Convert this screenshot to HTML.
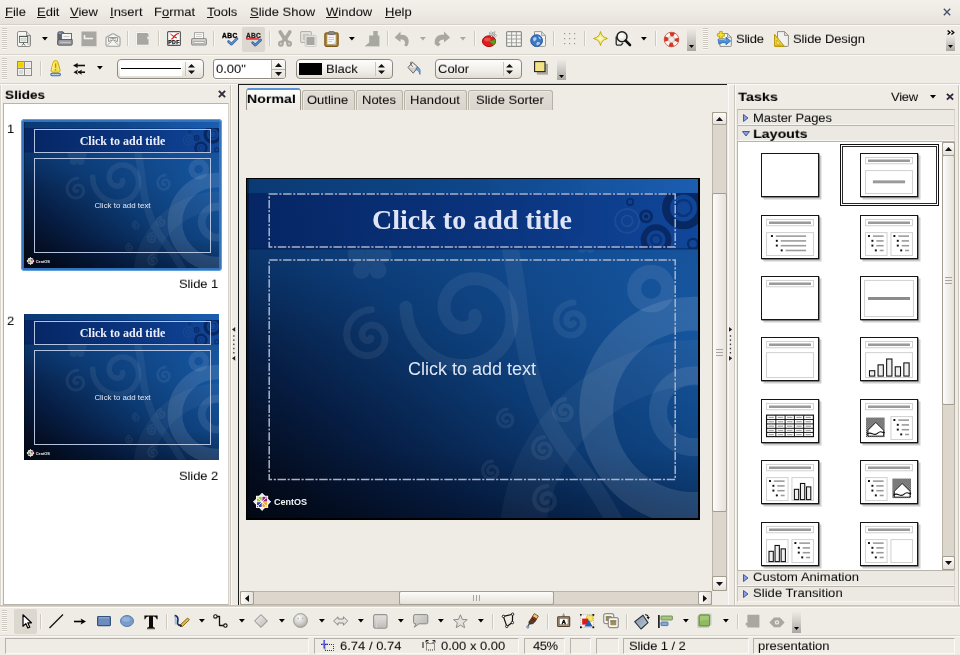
<!DOCTYPE html>
<html>
<head>
<meta charset="utf-8">
<title>Untitled 1 - OpenOffice.org Impress</title>
<style>
*{box-sizing:border-box;margin:0;padding:0}
html,body{width:960px;height:655px;overflow:hidden;background:#efebe5}
body{position:relative;font-family:"Liberation Sans",sans-serif;font-size:13px;color:#000}
.a{position:absolute}
.t{position:absolute;will-change:transform;transform-origin:0 12.3px;white-space:nowrap;line-height:16px;height:16px;color:#0c0c0c;-webkit-text-stroke:.05px #0c0c0c}
.w{-webkit-text-stroke:0 transparent}
.b{font-weight:bold;font-size:12.6px;color:#000;transform-origin:0 12.2px}
u{text-decoration:underline;text-underline-offset:1.2px;text-decoration-thickness:1px}
svg{position:absolute;overflow:visible}
svg.g{will-change:transform}
.hl{position:absolute;height:1px}
.vl{position:absolute;width:1px}
.sep{position:absolute;width:2px;height:15px;border-left:1px solid #cfcac1;border-right:1px solid #f9f8f5}
.press{position:absolute;background:#ddd8cf;border-radius:2px}
.combo{position:absolute;height:20px;border:1px solid #8f8b84;border-radius:4px;background:linear-gradient(#fdfdfc,#f2efea 55%,#e2ded6);box-shadow:0 1px 0 #faf9f7}
.field{position:absolute;height:20px;border:1px solid #8f8b84;border-radius:3px;background:#fff;box-shadow:0 1px 0 #faf9f7}
.row{position:absolute;height:16px;background:#ece9e3;border-top:1px solid #b9b4ab;border-left:1px solid #c9c5bd;border-right:1px solid #d9d5cd;border-bottom:1px solid #f7f6f3}
.tr{position:absolute;background:#dcd6cc;border:1px solid #b9b3a8}
.th{position:absolute;border:1px solid #a39d92;border-radius:2px}
.thv{background:linear-gradient(90deg,#fdfcfb,#f1eee9 50%,#e6e2db)}
.thh{background:linear-gradient(#fdfcfb,#f1eee9 50%,#e6e2db)}
.tab{position:absolute;top:90px;height:20px;background:linear-gradient(#e2ddd5,#dad5cc);border:1px solid #b7b2a8;border-bottom:none;border-radius:3px 3px 0 0;box-shadow:inset 1px 1px 0 #ece8e1}
.lay{position:absolute;width:58px;height:44px;background:#fff;border:1px solid #161616;box-shadow:.5px .5px 0 #333,2.5px 2.5px 0 #cecece}
.st{position:absolute;top:638px;height:16px;border-top:1px solid #b7b2a9;border-left:1px solid #b7b2a9;border-right:1px solid #fbfaf8;border-bottom:1px solid #fbfaf8}
.ovf{position:absolute;width:9px;background:linear-gradient(#efebe5,#d6d3ce 40%,#a9a7a3)}
</style>
</head>
<body>
<svg width="0" height="0" style="left:0;top:0"><defs><pattern id="dots" width="2" height="2" patternUnits="userSpaceOnUse"><rect width="1" height="1" fill="#222"/><rect x="1" y="1" width="1" height="1" fill="#222"/></pattern></defs><symbol id="art" viewBox="0 0 452 340" preserveAspectRatio="none"><defs>
<linearGradient id="bg1" x1="0" y1="1" x2="1" y2="0"><stop offset="0" stop-color="#020812"/><stop offset=".1" stop-color="#040e22"/><stop offset=".24" stop-color="#061c41"/><stop offset=".48" stop-color="#0c3b74"/><stop offset=".78" stop-color="#16569f"/><stop offset="1" stop-color="#2065b4"/></linearGradient>
<linearGradient id="bg2" x1="0" y1="0" x2="0" y2="1"><stop offset="0" stop-color="#0d4084" stop-opacity=".6"/><stop offset=".45" stop-color="#0b3a78" stop-opacity="0"/><stop offset=".8" stop-color="#010818" stop-opacity="0"/><stop offset="1" stop-color="#010818" stop-opacity=".28"/></linearGradient>
<linearGradient id="tb" x1="0" y1="0" x2="1" y2="0"><stop offset="0" stop-color="#052462"/><stop offset=".6" stop-color="#0a3480"/><stop offset="1" stop-color="#10469a"/></linearGradient>
<linearGradient id="top" x1="0" y1="0" x2="1" y2="0"><stop offset="0" stop-color="#0a3a72"/><stop offset=".5" stop-color="#0e4688"/><stop offset="1" stop-color="#1c5fb4"/></linearGradient>
<clipPath id="cl"><rect width="452" height="340"/></clipPath>
<clipPath id="clt"><rect y="14" width="452" height="56"/></clipPath>
</defs><g clip-path="url(#cl)"><rect width="452" height="340" fill="url(#bg1)"/><rect width="452" height="340" fill="url(#bg2)"/><g fill="none" stroke="#ffffff" stroke-linecap="round"><circle cx="448" cy="233" r="98" stroke-width="34" opacity=".11"/><circle cx="448" cy="233" r="36" stroke-width="18" opacity=".09"/><circle cx="456" cy="364" r="180" stroke-width="46" opacity=".045"/><circle cx="405" cy="110" r="17" stroke-width="14" opacity=".09"/><path d="M250 -10C256 40 268 80 272 120C278 180 290 230 316 266C330 286 345 300 372 350" stroke-width="17" opacity=".06"/><path d="M228.4 136.7 L228.8 138.2 L228.8 139.7 L228.4 141.4 L227.7 143.1 L226.7 144.7 L225.2 146.2 L223.5 147.5 L221.4 148.5 L219.0 149.1 L216.4 149.4 L213.7 149.2 L211.0 148.5 L208.2 147.3 L205.6 145.6 L203.2 143.4 L201.1 140.7 L199.4 137.6 L198.2 134.2 L197.5 130.5 L197.4 126.5 L198.0 122.5 L199.3 118.5 L201.2 114.6 L203.8 110.9 L207.0 107.6 L210.9 104.8 L215.2 102.5 L220.0 100.9 L225.1 100.1 L230.4 100.0 L235.8 100.8 L241.2 102.5 L246.3 105.1 L251.1 108.4 L255.4 112.6 L259.1 117.6 L262.1 123.1 L264.2 129.2 L265.4 135.7 L265.5 142.4 L264.6 149.2 L262.7 155.9 L259.6 162.4 L255.6 168.4 L250.5 173.9 L244.6 178.5 L237.9 182.3 L230.5 185.1 L222.7 186.7 L214.6 187.2 L206.4 186.3 L198.3 184.2 L190.4 180.8 L183.1 176.2 L176.4 170.4 L170.6 163.5 L165.9 155.8 L162.3 147.2 L160.1 138.1 L159.2 128.6" stroke-width="13" opacity=".065"/><path d="M327.1 144.7 L326.9 145.1 L326.6 145.5 L326.2 145.8 L325.7 146.1 L325.1 146.3 L324.4 146.4 L323.7 146.3 L323.0 146.1 L322.3 145.7 L321.7 145.2 L321.1 144.5 L320.6 143.7 L320.3 142.8 L320.2 141.8 L320.2 140.7 L320.4 139.6 L320.8 138.6 L321.4 137.6 L322.3 136.6 L323.3 135.8 L324.5 135.2 L325.8 134.8 L327.2 134.6 L328.7 134.6 L330.2 134.9 L331.6 135.5 L333.0 136.4 L334.2 137.5 L335.3 138.8 L336.2 140.3 L336.7 142.0 L337.0 143.9 L337.0 145.8 L336.7 147.7 L336.0 149.5 L334.9 151.3 L333.6 152.9 L332.0 154.3 L330.1 155.4 L328.0 156.2 L325.8 156.6 L323.5 156.7 L321.1 156.3 L318.8 155.6 L316.7 154.4 L314.7 152.9 L312.9 151.0 L311.5 148.8 L310.5 146.4 L309.9 143.8 L309.7 141.0 L310.0 138.2 L310.7 135.5 L312.0 132.9 L313.6 130.5 L315.7 128.4 L318.2 126.6 L320.9 125.3 L323.9 124.4 L327.1 124.0" stroke-width="6.5" opacity=".065"/><path d="M124.1 159.7 L123.9 160.2 L123.7 160.8 L123.2 161.2 L122.6 161.6 L121.9 161.9 L121.1 162.1 L120.2 162.1 L119.3 161.8 L118.4 161.4 L117.5 160.8 L116.7 159.9 L116.1 158.9 L115.6 157.7 L115.3 156.4 L115.3 155.0 L115.6 153.5 L116.1 152.1 L116.9 150.7 L118.0 149.4 L119.3 148.3 L120.9 147.5 L122.7 146.8 L124.6 146.5 L126.6 146.6 L128.7 147.0 L130.7 147.7 L132.6 148.9 L134.3 150.4 L135.8 152.2 L137.0 154.3 L137.9 156.7 L138.3 159.2 L138.3 161.8 L137.8 164.5 L136.9 167.1 L135.5 169.6 L133.6 171.8 L131.3 173.8 L128.7 175.3 L125.8 176.5 L122.7 177.1 L119.4 177.2 L116.2 176.7 L112.9 175.7 L109.9 174.1 L107.1 171.9 L104.6 169.3 L102.6 166.2 L101.1 162.8 L100.2 159.1 L99.9 155.2 L100.3 151.3 L101.4 147.4 L103.1 143.7 L105.5 140.3 L108.4 137.3 L111.9 134.8 L115.8 132.8 L120.1 131.6 L124.6 131.0" stroke-width="7" opacity=".065"/><path d="M319.1 234.7 L318.9 235.0 L318.5 235.3 L318.2 235.5 L317.7 235.7 L317.3 235.7 L316.7 235.7 L316.2 235.6 L315.7 235.4 L315.2 235.1 L314.7 234.6 L314.3 234.1 L314.0 233.5 L313.8 232.8 L313.8 232.1 L313.8 231.4 L314.0 230.6 L314.3 229.9 L314.8 229.2 L315.4 228.5 L316.1 228.0 L316.9 227.6 L317.9 227.3 L318.8 227.2 L319.8 227.3 L320.8 227.5 L321.8 227.9 L322.7 228.5 L323.5 229.3 L324.2 230.2 L324.8 231.2 L325.1 232.4 L325.3 233.6 L325.3 234.8 L325.0 236.1 L324.5 237.3 L323.9 238.4 L323.0 239.5 L321.9 240.4 L320.7 241.1 L319.3 241.6 L317.9 241.8 L316.4 241.8 L314.9 241.6 L313.4 241.1 L312.0 240.4 L310.7 239.4 L309.6 238.1 L308.7 236.7 L308.1 235.2 L307.7 233.5 L307.6 231.7 L307.8 230.0 L308.3 228.2 L309.1 226.6 L310.1 225.1 L311.5 223.7 L313.0 222.6 L314.8 221.8 L316.7 221.2 L318.7 221.0" stroke-width="4.5" opacity=".065"/><path d="M261.1 242.7 L260.8 243.0 L260.5 243.2 L260.2 243.4 L259.7 243.5 L259.3 243.6 L258.8 243.5 L258.3 243.4 L257.9 243.2 L257.4 242.9 L257.0 242.5 L256.7 242.0 L256.4 241.5 L256.3 240.9 L256.2 240.2 L256.3 239.5 L256.5 238.9 L256.8 238.2 L257.2 237.6 L257.7 237.1 L258.4 236.6 L259.1 236.3 L259.9 236.1 L260.7 236.0 L261.6 236.0 L262.4 236.3 L263.3 236.6 L264.1 237.1 L264.8 237.8 L265.3 238.6 L265.8 239.5 L266.1 240.5 L266.2 241.5 L266.2 242.6 L266.0 243.6 L265.6 244.7 L265.0 245.6 L264.2 246.5 L263.3 247.2 L262.3 247.8 L261.1 248.2 L259.9 248.5 L258.6 248.5 L257.3 248.3 L256.1 247.8 L254.9 247.2 L253.9 246.3 L253.0 245.3 L252.2 244.1 L251.7 242.8 L251.3 241.4 L251.3 239.9 L251.4 238.5 L251.9 237.0 L252.5 235.6 L253.4 234.4 L254.6 233.3 L255.9 232.3 L257.3 231.6 L258.9 231.2 L260.6 231.0" stroke-width="3.5" opacity=".065"/><path d="M298.1 272.7 L297.9 273.0 L297.5 273.3 L297.2 273.5 L296.7 273.7 L296.3 273.7 L295.7 273.7 L295.2 273.6 L294.7 273.4 L294.2 273.1 L293.7 272.6 L293.3 272.1 L293.0 271.5 L292.8 270.8 L292.8 270.1 L292.8 269.4 L293.0 268.6 L293.3 267.9 L293.8 267.2 L294.4 266.5 L295.1 266.0 L295.9 265.6 L296.9 265.3 L297.8 265.2 L298.8 265.3 L299.8 265.5 L300.8 265.9 L301.7 266.5 L302.5 267.3 L303.2 268.2 L303.8 269.2 L304.1 270.4 L304.3 271.6 L304.3 272.8 L304.0 274.1 L303.5 275.3 L302.9 276.4 L302.0 277.5 L300.9 278.4 L299.7 279.1 L298.3 279.6 L296.9 279.8 L295.4 279.8 L293.9 279.6 L292.4 279.1 L291.0 278.4 L289.7 277.4 L288.6 276.1 L287.7 274.7 L287.1 273.2 L286.7 271.5 L286.6 269.7 L286.8 268.0 L287.3 266.2 L288.1 264.6 L289.1 263.1 L290.5 261.7 L292.0 260.6 L293.8 259.8 L295.7 259.2 L297.7 259.0" stroke-width="4" opacity=".065"/><path d="M246.1 294.7 L245.8 295.0 L245.5 295.2 L245.2 295.4 L244.7 295.5 L244.3 295.6 L243.8 295.5 L243.3 295.4 L242.9 295.2 L242.4 294.9 L242.0 294.5 L241.7 294.0 L241.4 293.5 L241.3 292.9 L241.2 292.2 L241.3 291.5 L241.5 290.9 L241.8 290.2 L242.2 289.6 L242.7 289.1 L243.4 288.6 L244.1 288.3 L244.9 288.1 L245.7 288.0 L246.6 288.0 L247.4 288.3 L248.3 288.6 L249.1 289.1 L249.8 289.8 L250.3 290.6 L250.8 291.5 L251.1 292.5 L251.2 293.5 L251.2 294.6 L251.0 295.6 L250.6 296.7 L250.0 297.6 L249.2 298.5 L248.3 299.2 L247.3 299.8 L246.1 300.2 L244.9 300.5 L243.6 300.5 L242.3 300.3 L241.1 299.8 L239.9 299.2 L238.9 298.3 L238.0 297.3 L237.2 296.1 L236.7 294.8 L236.3 293.4 L236.3 291.9 L236.4 290.5 L236.9 289.0 L237.5 287.6 L238.4 286.4 L239.6 285.3 L240.9 284.3 L242.3 283.6 L243.9 283.2 L245.6 283.0" stroke-width="3.5" opacity=".065"/><path d="M301.1 323.7 L300.9 324.0 L300.6 324.3 L300.2 324.6 L299.7 324.8 L299.2 324.9 L298.7 324.9 L298.1 324.8 L297.5 324.6 L296.9 324.2 L296.4 323.8 L296.0 323.2 L295.6 322.6 L295.4 321.8 L295.3 321.0 L295.3 320.2 L295.5 319.3 L295.9 318.5 L296.4 317.7 L297.1 317.0 L297.9 316.4 L298.8 315.9 L299.8 315.6 L300.9 315.5 L302.1 315.5 L303.2 315.8 L304.3 316.2 L305.4 316.9 L306.3 317.8 L307.1 318.8 L307.7 320.0 L308.2 321.3 L308.4 322.7 L308.3 324.1 L308.1 325.5 L307.5 326.9 L306.7 328.3 L305.7 329.5 L304.5 330.5 L303.1 331.3 L301.5 331.9 L299.8 332.2 L298.1 332.2 L296.4 332.0 L294.6 331.4 L293.0 330.5 L291.6 329.4 L290.3 328.0 L289.2 326.3 L288.5 324.5 L288.0 322.6 L287.9 320.5 L288.1 318.5 L288.7 316.5 L289.6 314.5 L290.9 312.8 L292.4 311.2 L294.2 309.9 L296.3 308.9 L298.5 308.3 L300.8 308.0" stroke-width="4.5" opacity=".065"/></g><g fill="#fff" opacity="0.06"><circle cx="123.0" cy="66.0" r="8.7"/><circle cx="136.3" cy="75.7" r="8.7"/><circle cx="131.2" cy="91.3" r="8.7"/><circle cx="114.8" cy="91.3" r="8.7"/><circle cx="109.7" cy="75.7" r="8.7"/><circle cx="123" cy="80" r="7.0"/></g><g fill="#fff" opacity="0.08"><circle cx="350.0" cy="-1.0" r="5.6"/><circle cx="358.6" cy="5.2" r="5.6"/><circle cx="355.3" cy="15.3" r="5.6"/><circle cx="344.7" cy="15.3" r="5.6"/><circle cx="341.4" cy="5.2" r="5.6"/><circle cx="350" cy="8" r="4.5"/></g><g fill="#fff" opacity="0.05"><circle cx="340.0" cy="57.0" r="4.3"/><circle cx="346.7" cy="61.8" r="4.3"/><circle cx="344.1" cy="69.7" r="4.3"/><circle cx="335.9" cy="69.7" r="4.3"/><circle cx="333.3" cy="61.8" r="4.3"/><circle cx="340" cy="64" r="3.5"/></g><rect y="0" width="452" height="14" fill="url(#top)" opacity=".9"/><rect y="14" width="452" height="56" fill="url(#tb)" opacity=".93"/><rect y="69.5" width="452" height="1.2" fill="#041a4a" opacity=".6"/><g clip-path="url(#clt)" fill="none" stroke="#08265e"><circle cx="437.5" cy="29" r="17.5" stroke-width="8" opacity=".92"/><circle cx="437.5" cy="29" r="8" stroke-width="2.4" opacity=".55"/><circle cx="410" cy="61" r="12.5" stroke-width="6" opacity=".88"/><circle cx="410" cy="61" r="5" stroke-width="2.2" opacity=".6"/><circle cx="400" cy="37.5" r="5.6" stroke-width="2.8" opacity=".85"/><circle cx="400" cy="37.5" r="2.2" fill="#08265e" stroke="none" opacity=".9"/><circle cx="384" cy="23" r="3.2" stroke-width="1.6" opacity=".8"/><circle cx="447" cy="65" r="5" stroke-width="2.4" opacity=".8"/><circle cx="381" cy="42" r="12" stroke="#ffffff" stroke-width="2" opacity=".06"/><circle cx="381" cy="42" r="5.5" stroke="#ffffff" stroke-width="2" opacity=".06"/></g><rect width="2" height="340" fill="#01060f" opacity=".35"/><g transform="translate(7.5,316.2) scale(.95)"><g transform="translate(8,8) rotate(45)"><rect x="-6.6" y="-6.6" width="13.2" height="13.2" fill="#fff" opacity=".9"/></g><rect x="1.6" y="1.6" width="12.8" height="12.8" fill="#fff"/><rect x="2.6" y="2.6" width="5" height="5" fill="#9ccd2a"/><rect x="8.4" y="2.6" width="5" height="5" fill="#932279"/><rect x="2.6" y="8.4" width="5" height="5" fill="#3a3aa0"/><rect x="8.4" y="8.4" width="5" height="5" fill="#efa724"/><g transform="translate(8,8) rotate(45)" fill="none" stroke="#fff" stroke-width=".9"><rect x="-6.2" y="-6.2" width="12.4" height="12.4"/><path d="M0 -6.2V6.2M-6.2 0H6.2"/></g><path d="M8 -1.2L9.8 1.4H6.2ZM8 17.2L9.8 14.6H6.2ZM-1.2 8L1.4 6.2V9.8ZM17.2 8L14.6 6.2V9.8Z" fill="#e8e8e8"/><text x="20.5" y="11.6" font-family="Liberation Sans" font-weight="bold" font-size="9" fill="#f4f4f4" textLength="35" lengthAdjust="spacingAndGlyphs">CentOS</text></g></g></symbol></svg>
<div class="a" style="left:0px;top:0px;width:960px;height:24px;background:linear-gradient(#f3f0eb,#efebe5 45%,#e6e2db)"></div>
<span class="t " id="m1" style="left:5px;top:4px;transform:scale(1,.93);"><u>F</u>ile</span>
<span class="t " id="m2" style="left:37px;top:4px;transform:scale(1,.93);"><u>E</u>dit</span>
<span class="t " id="m3" style="left:70px;top:4px;transform:scale(1,.93);"><u>V</u>iew</span>
<span class="t " id="m4" style="left:110px;top:4px;transform:scale(1,.93);"><u>I</u>nsert</span>
<span class="t " id="m5" style="left:154px;top:4px;transform:scale(1,.93);">F<u>o</u>rmat</span>
<span class="t " id="m6" style="left:207px;top:4px;transform:scale(1,.93);"><u>T</u>ools</span>
<span class="t " id="m7" style="left:250px;top:4px;transform:scale(1,.93);"><u>S</u>lide Show</span>
<span class="t " id="m8" style="left:326px;top:4px;transform:scale(1,.93);"><u>W</u>indow</span>
<span class="t " id="m9" style="left:385px;top:4px;transform:scale(1,.93);"><u>H</u>elp</span>
<svg style="left:943px;top:7.5px" width="8" height="8" viewBox="0 0 8 8"><path d="M.8 .8L7.2 7.2M7.2 .8L.8 7.2" stroke="#4a4f69" stroke-width="1.35"/></svg>
<div class="hl" style="left:0px;top:24px;width:960px;background:#d6d1c8"></div>
<div class="hl" style="left:0px;top:25px;width:960px;background:#fbfaf8"></div>
<svg style="left:2px;top:28px" width="5" height="22" viewBox="0 0 5 22"><rect x="0" y="0" width="5" height="1" fill="#cdc8bf"/><rect x="0" y="1" width="5" height="1" fill="#fbfaf8"/><rect x="0" y="2" width="5" height="1" fill="#cdc8bf"/><rect x="0" y="3" width="5" height="1" fill="#fbfaf8"/><rect x="0" y="4" width="5" height="1" fill="#cdc8bf"/><rect x="0" y="5" width="5" height="1" fill="#fbfaf8"/><rect x="0" y="6" width="5" height="1" fill="#cdc8bf"/><rect x="0" y="7" width="5" height="1" fill="#fbfaf8"/><rect x="0" y="8" width="5" height="1" fill="#cdc8bf"/><rect x="0" y="9" width="5" height="1" fill="#fbfaf8"/><rect x="0" y="10" width="5" height="1" fill="#cdc8bf"/><rect x="0" y="11" width="5" height="1" fill="#fbfaf8"/><rect x="0" y="12" width="5" height="1" fill="#cdc8bf"/><rect x="0" y="13" width="5" height="1" fill="#fbfaf8"/><rect x="0" y="14" width="5" height="1" fill="#cdc8bf"/><rect x="0" y="15" width="5" height="1" fill="#fbfaf8"/><rect x="0" y="16" width="5" height="1" fill="#cdc8bf"/><rect x="0" y="17" width="5" height="1" fill="#fbfaf8"/><rect x="0" y="18" width="5" height="1" fill="#cdc8bf"/><rect x="0" y="19" width="5" height="1" fill="#fbfaf8"/><rect x="0" y="20" width="5" height="1" fill="#cdc8bf"/><rect x="0" y="21" width="5" height="1" fill="#fbfaf8"/></svg>
<svg style="left:17px;top:31px" width="14" height="16" viewBox="0 0 14 16"><path d="M1.5 .5H9.5L13.5 4.5V14a1.5 1.5 0 0 1-1.5 1.5H2A1.5 1.5 0 0 1 .5 14V2A1.5 1.5 0 0 1 1.5 .5Z" fill="#f6f6f4" stroke="#8b8b88"/>
<path d="M9.5 .5V4.5H13.5" fill="#dcdcd8" stroke="#8b8b88"/>
<path d="M10 5H13V14H10Z" fill="#c4c4c0" opacity=".7"/>
<rect x="2.5" y="5.5" width="8" height="6" fill="#fbfbfa" stroke="#6a6a6a" stroke-width=".9"/>
<rect x="4" y="7.2" width="5" height="2.8" fill="#dde8d2" stroke="#b4c4b0" stroke-width=".6"/>
<path d="M2 5.4H11" stroke="#555" stroke-width="1.1"/>
<path d="M6.5 11.5V13.2M4.6 14.6L6.5 12.8L8.4 14.6" stroke="#555" stroke-width=".9" fill="none"/></svg>
<svg style="left:41.6px;top:36.5px" width="5.8" height="3.5" viewBox="0 0 5.8 3.5"><path d="M0 0H5.8L2.9 3.5Z" fill="#000"/></svg>
<svg style="left:57px;top:31px" width="16" height="15" viewBox="0 0 16 15"><path d="M.8 2.2A1.4 1.4 0 0 1 2.2 .8H6L7.5 2.5H9V13.5H.8Z" fill="#62656b" stroke="#4a4c52" stroke-width=".8"/>
<path d="M1.5 1.5H5.5V3H1.5Z" fill="#7aa6dc"/>
<rect x="4.5" y="2.5" width="10" height="7" fill="#f4f4f2" stroke="#6a6a6a"/>
<path d="M6.5 5.5H12.5" stroke="#c4c4c0"/>
<path d="M2.5 8.5H15.2V13A1.2 1.2 0 0 1 14 14.2H2A1.2 1.2 0 0 1 .8 13V9.5Z" fill="#999b9f" stroke="#54565c" stroke-width=".9"/>
<path d="M3 11.5H13.5" stroke="#c2c4c7" stroke-width="1.4"/></svg>
<svg style="left:81px;top:31px" width="16" height="16" viewBox="0 0 16 16"><rect x=".5" y=".5" width="15" height="15" fill="#a9a7a2"/>
<path d="M3.5 4V7.5H12" stroke="#f4f2ee" stroke-width="1.6" fill="none"/>
<rect x="0" y="15" width="16" height="1.2" fill="#e2dfd9"/></svg>
<svg style="left:105px;top:32.5px" width="16" height="14" viewBox="0 0 16 14"><path d="M1 5.4C1 4.8 1.3 4.4 1.8 4L6.6 1.2C7.5 .7 8.5 .7 9.4 1.2L14.2 4C14.7 4.4 15 4.8 15 5.4V11.8A1.4 1.4 0 0 1 13.6 13.2H2.4A1.4 1.4 0 0 1 1 11.8Z" fill="#f6f5f3" stroke="#a09f9b" stroke-width="1.1"/>
<path d="M3.6 4.6H12.4V8.6L8 6.8L3.6 8.6Z" fill="#fff" stroke="#85847f" stroke-width=".9"/>
<path d="M5 6.2C6.5 5.2 9.5 5.2 11 6.2" stroke="#85847f" stroke-width=".8" fill="none"/>
<path d="M2.2 12.2L6.6 8.6M13.8 12.2L9.4 8.6" stroke="#aeada9" stroke-width="1" fill="none"/></svg>
<div class="sep" style="left:127px;top:31px"></div>
<svg style="left:135px;top:31px" width="16" height="16" viewBox="0 0 16 16"><path d="M.6 .6H13.2L15 2.4V5.4H13.6V8.2H15V15.2H.6Z" fill="#f7f5f1" stroke="#e3e0da" stroke-width=".6"/>
<path d="M2 2H12.4L13.6 3.2V5.4H12.4V8.2H13.6V13.8H2Z" fill="#a9a7a2"/></svg>
<div class="sep" style="left:158px;top:31px"></div>
<svg class="g" style="left:167px;top:31px" width="14" height="15" viewBox="0 0 14 15"><rect x=".6" y=".6" width="12.8" height="13.8" rx="1" fill="#fbfbfa" stroke="#555" stroke-width="1.1"/>
<path d="M2.4 1.8C4.6 3.4 6.4 4.6 10 6.6L9.4 7.6C6 6 4 4.4 2.4 1.8Z" fill="#e02020"/>
<path d="M12 2C9.6 2.2 7.6 3.6 6.4 5.4C5.6 6.6 5 7.4 3.6 8L4.4 8.6C6 8.2 7 7.2 7.8 6C8.8 4.4 10 3.2 12 3Z" fill="#e02020"/>
<text x="7" y="12.8" font-family="Liberation Sans" font-weight="bold" font-size="5.2" text-anchor="middle" fill="#111" stroke="#111" stroke-width=".25" letter-spacing=".3">PDF</text></svg>
<svg style="left:191px;top:32px" width="16" height="14" viewBox="0 0 16 14"><rect x="3.5" y=".6" width="9" height="6.5" fill="#fafaf9" stroke="#a8a7a3"/>
<path d="M5 2.5H11M5 4.5H11" stroke="#d0cfcb"/>
<path d="M2 6.5H14A1.4 1.4 0 0 1 15.4 7.9V11.6A1.4 1.4 0 0 1 14 13H2A1.4 1.4 0 0 1 .6 11.6V7.9A1.4 1.4 0 0 1 2 6.5Z" fill="#cfcecb" stroke="#8f8e8a" stroke-width="1.1"/>
<rect x="2.8" y="9.6" width="10.4" height="2" fill="#f2f1ee" stroke="#9d9c98" stroke-width=".7"/></svg>
<div class="sep" style="left:213px;top:31px"></div>
<svg class="g" style="left:222px;top:32px" width="17" height="14" viewBox="0 0 17 14"><text x="0" y="5.6" font-family="Liberation Sans" font-weight="bold" font-size="6.6" fill="#000" letter-spacing=".5" stroke="#000" stroke-width=".35">ABC</text>
<path d="M6.5 9.5L9.5 12.2L15 6.6" stroke="#3465a4" stroke-width="2.6" fill="none" stroke-linecap="round" stroke-linejoin="round"/>
<path d="M6.7 9.5L9.5 12L14.8 6.8" stroke="#82aee0" stroke-width="1" fill="none" stroke-linecap="round" stroke-linejoin="round"/></svg>
<div class="press" style="left:242px;top:27px;width:23px;height:25px;"></div>
<svg class="g" style="left:246px;top:32px" width="16" height="16" viewBox="0 0 16 16"><text x="0" y="5.6" font-family="Liberation Sans" font-weight="bold" font-size="6.6" fill="#222" letter-spacing=".3" stroke="#222" stroke-width=".3">ABC</text>
<path d="M0 7.3L1 6.6L2 7.3L3 6.6L4 7.3L5 6.6L6 7.3L7 6.6L8 7.3L9 6.6L10 7.3L11 6.6L12 7.3L13 6.6" stroke="#e01818" stroke-width="1.1" fill="none"/>
<path d="M6.6 10.6L9.4 13.2L14.6 8" stroke="#2c5ea8" stroke-width="2.6" fill="none" stroke-linecap="round" stroke-linejoin="round"/>
<path d="M6.8 10.6L9.4 13L14.4 8.2" stroke="#86b0e2" stroke-width=".9" fill="none" stroke-linecap="round" stroke-linejoin="round"/></svg>
<div class="sep" style="left:269px;top:31px"></div>
<svg style="left:278px;top:31px" width="14" height="16" viewBox="0 0 14 16"><path d="M2.2 1L7 8.4L11.8 1" stroke="#a9a7a2" stroke-width="3.6" fill="none" stroke-linejoin="round" stroke-linecap="round"/>
<path d="M7 7.4L3.4 12M7 7.4L10.6 12" stroke="#a9a7a2" stroke-width="3" fill="none"/>
<ellipse cx="2.9" cy="12.8" rx="1.9" ry="2" fill="#d9d6d0" stroke="#a9a7a2" stroke-width="2"/>
<ellipse cx="11.1" cy="12.8" rx="1.9" ry="2" fill="#d9d6d0" stroke="#a9a7a2" stroke-width="2"/></svg>
<svg style="left:300px;top:31px" width="17" height="16" viewBox="0 0 17 16"><rect x=".7" y=".7" width="10.6" height="10.6" rx="1" fill="#f1efeb" stroke="#b3b1ac" stroke-width="1.2"/>
<rect x="2.6" y="2.6" width="6.8" height="6.8" fill="#c9c7c2"/>
<rect x="5" y="4.4" width="11" height="11" rx="1" fill="#f3f1ed" stroke="#c4c2bd" stroke-width=".8"/>
<rect x="6.4" y="5.8" width="8.2" height="8.2" fill="#a9a7a2"/></svg>
<svg style="left:323.5px;top:31px" width="15" height="16" viewBox="0 0 15 16"><rect x=".9" y="1.9" width="13.2" height="13.4" rx="1.6" fill="#b98a3c" stroke="#7e5a14" stroke-width="1.3"/>
<rect x="3" y="3.6" width="9" height="10" fill="#f7f7f5" stroke="#9a8c6c" stroke-width=".6"/>
<path d="M4.5 6.5H10M4.5 8.5H10M4.5 10.5H8" stroke="#c9c9c5"/>
<path d="M9 13.6L12 10.8V13.6Z" fill="#d8d8d4" stroke="#aaa" stroke-width=".4"/>
<rect x="4.6" y=".6" width="5.8" height="3" rx=".8" fill="#8a8a8a" stroke="#666" stroke-width=".8"/></svg>
<svg style="left:348.6px;top:36.5px" width="5.8" height="3.5" viewBox="0 0 5.8 3.5"><path d="M0 0H5.8L2.9 3.5Z" fill="#000"/></svg>
<svg style="left:364.5px;top:31px" width="16" height="16" viewBox="0 0 16 16"><path d="M8.3 0H12.7V4.6H14.4V15H0L4.2 11.6V4.6H8.3Z" fill="#a9a7a2"/>
<path d="M0 15.5H14.6" stroke="#d6d3cd" stroke-width="1"/></svg>
<div class="sep" style="left:387px;top:31px"></div>
<svg style="left:393.5px;top:31px" width="17" height="16" viewBox="0 0 17 16"><path d="M6.5 .5L.6 6.4L6.5 11V8.2C9.2 8.2 11 9.6 11.2 12.2L10.2 14.4L12.8 15.5C15 12.8 15.4 9 13.6 6.4C12 4.2 9.4 3.6 6.5 3.8Z" fill="#a9a7a2"/></svg>
<svg style="left:419.6px;top:36.5px" width="5.8" height="3.5" viewBox="0 0 5.8 3.5"><path d="M0 0H5.8L2.9 3.5Z" fill="#a9a7a2"/></svg>
<svg style="left:433.5px;top:31px" width="17" height="16" viewBox="0 0 17 16"><path d="M10 .5L16 6.4L10 11.5V8.4C7.2 8.4 5.6 9.4 4.6 11.4L6.6 13L4.2 15.4L.8 13.2C.2 9.6 1.4 6.6 3.6 5C5.4 3.8 7.6 3.6 10 3.8Z" fill="#a9a7a2"/></svg>
<svg style="left:459.6px;top:36.5px" width="5.8" height="3.5" viewBox="0 0 5.8 3.5"><path d="M0 0H5.8L2.9 3.5Z" fill="#a9a7a2"/></svg>
<div class="sep" style="left:474px;top:31px"></div>
<svg class="g" style="left:482px;top:31px" width="16" height="16" viewBox="0 0 16 16"><ellipse cx="7" cy="10.2" rx="6.6" ry="5.4" fill="#e21b1b" stroke="#a40000" stroke-width=".9"/>
<path d="M7 10.2L13.4 8.4A6.6 5.4 0 0 1 11.6 14Z" fill="#57a020" stroke="#3a7a0e" stroke-width=".5"/>
<ellipse cx="5.4" cy="8.6" rx="3.2" ry="1.8" fill="#f77" opacity=".55"/>
<text x="7.6" y="6.2" font-family="Liberation Sans" font-weight="bold" font-size="7.5" fill="#fff" stroke="#555" stroke-width=".7" paint-order="stroke">%</text></svg>
<svg style="left:506px;top:31px" width="16" height="16" viewBox="0 0 16 16"><rect x=".6" y=".6" width="14.8" height="14.8" rx="1" fill="#f6f6f4" stroke="#908f8b" stroke-width="1.2"/>
<path d="M1 4.3H15M1 8H15M1 11.7H15M5.6 1V15M10.4 1V15" stroke="#a3a29e" stroke-width="1.1"/></svg>
<svg style="left:530px;top:31px" width="17" height="16" viewBox="0 0 17 16"><path d="M4.5 .6H11.5L15.5 4.6V14.4A1 1 0 0 1 14.5 15.4H4.5Z" fill="#f4f4f2" stroke="#9a9995"/>
<path d="M11.5 .6V4.6H15.5Z" fill="#deddd9" stroke="#9a9995" stroke-width=".8"/>
<circle cx="6.6" cy="9.6" r="5.9" fill="#3b78c4" stroke="#1f4f94" stroke-width=".9"/>
<path d="M3 7.2C4.4 5.6 6 6 6.6 7.4C7 8.6 5.4 9.4 4.4 10.6C3.6 9.8 3 8.6 3 7.2ZM8.2 5.4C9.6 5.6 10.6 6.6 11 8C10 8.6 9 7.6 8.2 5.4ZM7 11.4C8.2 10.6 9.6 11 10 12.2C9.2 13.6 8 14.2 6.8 14.2C6.2 13.2 6.2 12.2 7 11.4Z" fill="#bcd6f4" opacity=".9"/></svg>
<div class="sep" style="left:553px;top:31px"></div>
<svg style="left:563.5px;top:33px" width="12" height="12" viewBox="0 0 12 12"><rect x="0" y="0" width="1.2" height="1.2" fill="#9a968f"/><rect x="0" y="5" width="1.2" height="1.2" fill="#9a968f"/><rect x="0" y="10" width="1.2" height="1.2" fill="#9a968f"/><rect x="5" y="0" width="1.2" height="1.2" fill="#9a968f"/><rect x="5" y="5" width="1.2" height="1.2" fill="#9a968f"/><rect x="5" y="10" width="1.2" height="1.2" fill="#9a968f"/><rect x="10" y="0" width="1.2" height="1.2" fill="#9a968f"/><rect x="10" y="5" width="1.2" height="1.2" fill="#9a968f"/><rect x="10" y="10" width="1.2" height="1.2" fill="#9a968f"/></svg>
<div class="sep" style="left:584px;top:31px"></div>
<svg style="left:592.5px;top:31px" width="15" height="15" viewBox="0 0 15 15"><path d="M7.5 .5C8.3 4.6 10.2 6.4 14.5 7.5C10.2 8.6 8.3 10.4 7.5 14.5C6.7 10.4 4.8 8.6 .5 7.5C4.8 6.4 6.7 4.6 7.5 .5Z" fill="#f7ec6a" stroke="#c8a70a" stroke-width="1"/>
<path d="M7.5 3.5C8 5.8 9 6.8 11.5 7.5C9 8.2 8 9.2 7.5 11.5C7 9.2 6 8.2 3.5 7.5C6 6.8 7 5.8 7.5 3.5Z" fill="#fdf8b8"/></svg>
<svg style="left:615px;top:31px" width="17" height="16" viewBox="0 0 17 16"><path d="M1.2 5.5V12.8A1.4 1.4 0 0 0 2.6 14.2H6L8 12" fill="#efeeeb" stroke="#2a2a2a" stroke-width="1.3"/>
<circle cx="7" cy="5.8" r="5" fill="#e9e9e6" stroke="#1c1c1c" stroke-width="1.5"/>
<circle cx="6.2" cy="4.8" r="2.6" fill="#fff" opacity=".8"/>
<path d="M10.6 9.6L15 14" stroke="#111" stroke-width="2.6" stroke-linecap="round"/></svg>
<svg style="left:640.6px;top:36.5px" width="5.8" height="3.5" viewBox="0 0 5.8 3.5"><path d="M0 0H5.8L2.9 3.5Z" fill="#000"/></svg>
<div class="sep" style="left:655px;top:31px"></div>
<svg style="left:664px;top:31.5px" width="15" height="15" viewBox="0 0 15 15"><circle cx="7.5" cy="7.5" r="5.2" fill="none" stroke="#f7f5f2" stroke-width="4.2"/>
<circle cx="7.5" cy="7.5" r="5.2" fill="none" stroke="#e0301e" stroke-width="4.2" stroke-dasharray="4.08 4.08" stroke-dashoffset="2.04"/>
<circle cx="7.5" cy="7.5" r="7.3" fill="none" stroke="#b8402e" stroke-width=".7"/>
<circle cx="7.5" cy="7.5" r="3.1" fill="none" stroke="#b9b4ae" stroke-width=".7"/></svg>
<div class="ovf" style="left:687px;top:28px;width:9px;height:23px;"></div>
<svg style="left:689px;top:44.5px" width="5" height="3" viewBox="0 0 5 3"><path d="M0 0H5L2.5 3Z" fill="#000"/></svg>
<svg style="left:703px;top:28px" width="5" height="22" viewBox="0 0 5 22"><rect x="0" y="0" width="5" height="1" fill="#cdc8bf"/><rect x="0" y="1" width="5" height="1" fill="#fbfaf8"/><rect x="0" y="2" width="5" height="1" fill="#cdc8bf"/><rect x="0" y="3" width="5" height="1" fill="#fbfaf8"/><rect x="0" y="4" width="5" height="1" fill="#cdc8bf"/><rect x="0" y="5" width="5" height="1" fill="#fbfaf8"/><rect x="0" y="6" width="5" height="1" fill="#cdc8bf"/><rect x="0" y="7" width="5" height="1" fill="#fbfaf8"/><rect x="0" y="8" width="5" height="1" fill="#cdc8bf"/><rect x="0" y="9" width="5" height="1" fill="#fbfaf8"/><rect x="0" y="10" width="5" height="1" fill="#cdc8bf"/><rect x="0" y="11" width="5" height="1" fill="#fbfaf8"/><rect x="0" y="12" width="5" height="1" fill="#cdc8bf"/><rect x="0" y="13" width="5" height="1" fill="#fbfaf8"/><rect x="0" y="14" width="5" height="1" fill="#cdc8bf"/><rect x="0" y="15" width="5" height="1" fill="#fbfaf8"/><rect x="0" y="16" width="5" height="1" fill="#cdc8bf"/><rect x="0" y="17" width="5" height="1" fill="#fbfaf8"/><rect x="0" y="18" width="5" height="1" fill="#cdc8bf"/><rect x="0" y="19" width="5" height="1" fill="#fbfaf8"/><rect x="0" y="20" width="5" height="1" fill="#cdc8bf"/><rect x="0" y="21" width="5" height="1" fill="#fbfaf8"/></svg>
<svg style="left:716.5px;top:31px" width="15" height="16" viewBox="0 0 15 16"><path d="M3 2.5H10.5L14.3 6.3V14.6A.8.8 0 0 1 13.5 15.4H3Z" fill="#f5f5f3" stroke="#8e8d89"/>
<path d="M10.5 2.5V6.3H14.3Z" fill="#dddcd8" stroke="#8e8d89" stroke-width=".8"/>
<path d="M1.2 8.2C4 7.4 7 7.6 9 8.4V6.2L13.6 10L9 13.8V11.8C6.6 11.4 3.8 11.8 2 13.2C1.6 11.6 1.2 10 1.2 8.2Z" fill="#4d8fd8" stroke="#2a62ac" stroke-width=".8"/>
<path d="M2 8.8C4.6 8.2 7 8.4 9.2 9.2" stroke="#a8cdf4" stroke-width=".9" fill="none"/>
<path d="M2.6 .4H5.2V2.6H7.4V5.2H5.2V7.4H2.6V5.2H.4V2.6H2.6Z" fill="#f5e030" stroke="#b89c00" stroke-width=".8"/></svg>
<span class="t " id="tsl" style="left:736px;top:30.5px;transform:scale(1,.93);letter-spacing:-.25px">Slide</span>
<svg style="left:774px;top:31px" width="15" height="16" viewBox="0 0 15 16"><path d="M3.5 .6H10.5L14.4 4.5V14.6A.8.8 0 0 1 13.6 15.4H3.5Z" fill="#f1f1ef" stroke="#8e8d89"/>
<path d="M10.5 .6V4.5H14.4Z" fill="#dddcd8" stroke="#8e8d89" stroke-width=".8"/>
<path d="M.6 3.4V15.4H10.4Z" fill="#f2d62c" stroke="#b8960a" stroke-width="1"/>
<path d="M2.8 9V13.2H6.2Z" fill="#efebe5" stroke="#b8960a" stroke-width=".6"/>
<path d="M2 15V13.8M4 15V13.8M6 15V13.8M8 15V13.8" stroke="#8a6e00" stroke-width=".6"/></svg>
<span class="t " id="tsd" style="left:792.5px;top:30.5px;transform:scale(1,.93);letter-spacing:-.1px">Slide Design</span>
<svg style="left:946.5px;top:29.5px" width="8" height="5" viewBox="0 0 8 5"><path d="M.6 .4L3 2.4L.6 4.4M4.4 .4L6.8 2.4L4.4 4.4" stroke="#000" stroke-width="1.3" fill="none"/></svg>
<div class="ovf" style="left:946px;top:35px;width:9px;height:16px;"></div>
<svg style="left:948px;top:44.5px" width="5" height="3" viewBox="0 0 5 3"><path d="M0 0H5L2.5 3Z" fill="#000"/></svg>
<div class="hl" style="left:0px;top:54px;width:960px;background:#dad5cc"></div>
<div class="hl" style="left:0px;top:55px;width:960px;background:#f9f8f5"></div>
<svg style="left:2px;top:58px" width="5" height="22" viewBox="0 0 5 22"><rect x="0" y="0" width="5" height="1" fill="#cdc8bf"/><rect x="0" y="1" width="5" height="1" fill="#fbfaf8"/><rect x="0" y="2" width="5" height="1" fill="#cdc8bf"/><rect x="0" y="3" width="5" height="1" fill="#fbfaf8"/><rect x="0" y="4" width="5" height="1" fill="#cdc8bf"/><rect x="0" y="5" width="5" height="1" fill="#fbfaf8"/><rect x="0" y="6" width="5" height="1" fill="#cdc8bf"/><rect x="0" y="7" width="5" height="1" fill="#fbfaf8"/><rect x="0" y="8" width="5" height="1" fill="#cdc8bf"/><rect x="0" y="9" width="5" height="1" fill="#fbfaf8"/><rect x="0" y="10" width="5" height="1" fill="#cdc8bf"/><rect x="0" y="11" width="5" height="1" fill="#fbfaf8"/><rect x="0" y="12" width="5" height="1" fill="#cdc8bf"/><rect x="0" y="13" width="5" height="1" fill="#fbfaf8"/><rect x="0" y="14" width="5" height="1" fill="#cdc8bf"/><rect x="0" y="15" width="5" height="1" fill="#fbfaf8"/><rect x="0" y="16" width="5" height="1" fill="#cdc8bf"/><rect x="0" y="17" width="5" height="1" fill="#fbfaf8"/><rect x="0" y="18" width="5" height="1" fill="#cdc8bf"/><rect x="0" y="19" width="5" height="1" fill="#fbfaf8"/><rect x="0" y="20" width="5" height="1" fill="#cdc8bf"/><rect x="0" y="21" width="5" height="1" fill="#fbfaf8"/></svg>
<svg style="left:17px;top:60.5px" width="15" height="15" viewBox="0 0 15 15"><rect x=".5" y=".5" width="14" height="14" fill="#f2f1ee" stroke="#8c8b87"/>
<rect x="1" y="1" width="6.5" height="6.5" fill="#f8dc18"/>
<rect x="2" y="2" width="4" height="4" fill="#f3cf00"/>
<rect x="9" y="2" width="4" height="4" fill="#e9e8e5"/><rect x="2" y="9" width="4" height="4" fill="#d9d8d5"/><rect x="9" y="9" width="4" height="4" fill="#e9e8e5"/>
<path d="M7.5 .5V14.5M.5 7.5H14.5" stroke="#8c8b87"/></svg>
<div class="sep" style="left:40px;top:61px"></div>
<svg style="left:50px;top:60px" width="12" height="16" viewBox="0 0 12 16"><path d="M5.6 .6C3.8 .6 3.2 1.8 3 3.2L1.2 9.6C.8 11.2 1.6 12.2 3 12.2H8.2C9.6 12.2 10.4 11.2 10 9.6L8.2 3.2C8 1.8 7.4 .6 5.6 .6Z" fill="#f6e458" stroke="#c8a60a" stroke-width="1"/>
<path d="M5.6 3.4V7.8" stroke="#b89400" stroke-width="1.3"/><circle cx="5.6" cy="9.8" r=".9" fill="#b89400"/>
<path d="M3.8 3.2L2.4 9.8" stroke="#fdf7b4" stroke-width="1"/>
<rect x=".8" y="13.2" width="9.6" height="2.5" rx="1.2" fill="#b6cdea" stroke="#3c6eb4" stroke-width="1.1"/></svg>
<svg style="left:73px;top:62.5px" width="12" height="12" viewBox="0 0 12 12"><path d="M12 2.5H3.5" stroke="#111" stroke-width="1.6"/><path d="M0 2.5L4.6 0V5Z" fill="#111"/>
<path d="M12 9.2H5" stroke="#111" stroke-width="1.6"/><path d="M.5 9.2L5 6.6L4 9.2L5 11.8Z" fill="#111"/><path d="M4.5 9.2L9 6.6L8 9.2L9 11.8Z" fill="#111"/></svg>
<svg style="left:96.6px;top:66px" width="5.8" height="3.5" viewBox="0 0 5.8 3.5"><path d="M0 0H5.8L2.9 3.5Z" fill="#000"/></svg>
<div class="combo" style="left:117px;top:59px;width:87px;height:20px;"></div>
<div class="a" style="left:120px;top:61.5px;width:62px;height:14px;background:#fff;border-radius:1px"></div>
<div class="hl" style="left:121px;top:68px;width:60px;background:#000"></div>
<div class="vl" style="left:185px;top:62px;height:14px;background:#c9c5bd"></div>
<svg style="left:187.5px;top:63.5px" width="7" height="10" viewBox="0 0 7 10"><path d="M0 3.6L3.5 0L7 3.6ZM0 6.4L3.5 10L7 6.4Z" fill="#111"/></svg>
<div class="field" style="left:213px;top:59px;width:73px;height:20px;"></div>
<div class="a" style="left:271px;top:60px;width:14px;height:18px;background:linear-gradient(#fbfaf8,#e6e2db);border-left:1px solid #b7b2a9;border-radius:0 2px 2px 0"></div>
<div class="hl" style="left:272px;top:69px;width:13px;background:#b7b2a9"></div>
<svg style="left:275px;top:62.5px" width="7" height="4" viewBox="0 0 7 4"><path d="M0 4L3.5 0L7 4Z" fill="#111"/></svg>
<svg style="left:275px;top:71.5px" width="7" height="4" viewBox="0 0 7 4"><path d="M0 0L3.5 4L7 0Z" fill="#111"/></svg>
<span class="t " id="w0" style="left:216px;top:61px;transform:scale(1,.93);">0.00"</span>
<div class="combo" style="left:296px;top:59px;width:97px;height:20px;"></div>
<div class="a" style="left:299px;top:62.5px;width:23px;height:12.5px;background:#000"></div>
<span class="t " id="cblack" style="left:326px;top:61px;transform:scale(1,.93);">Black</span>
<div class="vl" style="left:375px;top:62px;height:14px;background:#c9c5bd"></div>
<svg style="left:377.5px;top:63.5px" width="7" height="10" viewBox="0 0 7 10"><path d="M0 3.6L3.5 0L7 3.6ZM0 6.4L3.5 10L7 6.4Z" fill="#111"/></svg>
<svg style="left:406px;top:61px" width="15" height="14" viewBox="0 0 15 14"><path d="M2 6.5L6.5 1.2L12 6.2L7.2 12.2Z" fill="#d2d1ce" stroke="#6a6965" stroke-width="1"/>
<path d="M3.4 6.6L6.6 2.8L10.4 6.2Z" fill="#f2f1ee"/>
<path d="M5.2 .6C4.2 2.4 5 4.6 6.8 5.6" stroke="#555" stroke-width="1" fill="none"/>
<path d="M10.6 6.6C13.4 6.2 14.6 8 14 13.4C13.2 11 12.6 9.4 10 8.6Z" fill="#7da1d4" stroke="#3f6aa8" stroke-width=".7"/></svg>
<div class="combo" style="left:435px;top:59px;width:87px;height:20px;"></div>
<span class="t " id="ccolor" style="left:438px;top:61px;transform:scale(1,.93);">Color</span>
<div class="vl" style="left:503px;top:62px;height:14px;background:#c9c5bd"></div>
<svg style="left:505.5px;top:63.5px" width="7" height="10" viewBox="0 0 7 10"><path d="M0 3.6L3.5 0L7 3.6ZM0 6.4L3.5 10L7 6.4Z" fill="#111"/></svg>
<svg style="left:533.5px;top:60.5px" width="15" height="14" viewBox="0 0 15 14"><rect x="3" y="3" width="11" height="10.5" fill="#9b9994"/>
<rect x="2.6" y="2.6" width="11" height="10.5" fill="#b8b6b1" opacity=".6"/>
<rect x=".6" y=".6" width="10.4" height="10" fill="#f3e383" stroke="#222" stroke-width="1.1"/></svg>
<div class="ovf" style="left:557px;top:59px;width:9px;height:21px;"></div>
<svg style="left:559px;top:74.5px" width="5" height="3" viewBox="0 0 5 3"><path d="M0 0H5L2.5 3Z" fill="#000"/></svg>
<div class="hl" style="left:0px;top:83px;width:960px;background:#d8d3ca"></div>
<div class="hl" style="left:0px;top:84px;width:960px;background:#fbfaf8"></div>
<span class="t b" id="slidesT" style="left:5px;top:86.5px;transform:scale(1.078,.93);">Slides</span>
<svg style="left:218px;top:89.5px" width="8" height="8" viewBox="0 0 8 8"><path d="M.9 .9L7.1 7.1M7.1 .9L.9 7.1" stroke="#2c2c3a" stroke-width="1.9"/></svg>
<div class="a" style="left:3px;top:103px;width:226px;height:502px;background:#fff;border:1px solid #b9b4ab;border-right-color:#d5d1c9"></div>
<div class="vl" style="left:0px;top:85px;height:521px;background:#d9d5cd"></div>
<div class="vl" style="left:1px;top:85px;height:521px;background:#fbfaf8"></div>
<div class="vl" style="left:230px;top:85px;height:521px;background:#cbc6bd"></div>
<div class="vl" style="left:231px;top:85px;height:521px;background:#fbfaf8"></div>
<svg style="left:232.2px;top:327px" width="3.4" height="34" viewBox="0 0 3.4 34"><path d="M0 2.4L3.2 0V4.8ZM0 31.4L3.2 29V33.8Z" fill="#222"/><rect x="1.2" y="8.2" width="1.3" height="1.5" fill="#3a3a3a"/><rect x="1.2" y="12.399999999999999" width="1.3" height="1.5" fill="#3a3a3a"/><rect x="1.2" y="16.6" width="1.3" height="1.5" fill="#3a3a3a"/><rect x="1.2" y="20.8" width="1.3" height="1.5" fill="#3a3a3a"/><rect x="1.2" y="25.0" width="1.3" height="1.5" fill="#3a3a3a"/></svg>
<span class="t " id="n1" style="left:7px;top:121px;transform:scale(1,.93);">1</span>
<span class="t " id="n2" style="left:7px;top:312.8px;transform:scale(1,.93);">2</span>
<span class="t " id="sl1" style="left:179.2px;top:275.9px;transform:scale(1,.93);letter-spacing:-.1px">Slide 1</span>
<span class="t " id="sl2" style="left:179.2px;top:467.6px;transform:scale(1,.93);letter-spacing:-.1px">Slide 2</span>
<div class="a" style="left:21px;top:119px;width:201px;height:152px;background:#3474bc;border-radius:4px;box-shadow:inset 0 0 0 1px #5f9fdc"></div>
<svg class="g" style="left:24px;top:122px" width="195" height="146"><use href="#art" width="195" height="146"/></svg>
<div class="a" style="left:34px;top:129px;width:177px;height:24px;border:1px solid #b3c2de"></div>
<div class="a" style="left:34px;top:158px;width:177px;height:95px;border:1px solid #b3c2de"></div>
<span class="t w" style="left:34px;top:133px;width:177px;text-align:center;font-family:'Liberation Serif',serif;font-weight:bold;font-size:12px;color:#eef0fa">Click to add title</span>
<span class="t w" style="left:34px;top:198px;width:177px;text-align:center;font-size:7.9px;color:#e4e8f4">Click to add text</span>
<svg class="g" style="left:24px;top:314px" width="195" height="146"><use href="#art" width="195" height="146"/></svg>
<div class="a" style="left:34px;top:321px;width:177px;height:24px;border:1px solid #b3c2de"></div>
<div class="a" style="left:34px;top:350px;width:177px;height:95px;border:1px solid #b3c2de"></div>
<span class="t w" style="left:34px;top:325px;width:177px;text-align:center;font-family:'Liberation Serif',serif;font-weight:bold;font-size:12px;color:#eef0fa">Click to add title</span>
<span class="t w" style="left:34px;top:390px;width:177px;text-align:center;font-size:7.9px;color:#e4e8f4">Click to add text</span>
<div class="hl" style="left:238px;top:84px;width:489px;background:#1a1a1a"></div>
<div class="vl" style="left:238px;top:84px;height:522px;background:#1a1a1a"></div>
<div class="vl" style="left:728px;top:85px;height:521px;background:#fbfaf8"></div>
<div class="tab" style="left:302px;top:90px;width:53px;height:20px;"></div>
<div class="tab" style="left:356px;top:90px;width:47px;height:20px;"></div>
<div class="tab" style="left:404px;top:90px;width:63px;height:20px;"></div>
<div class="tab" style="left:468px;top:90px;width:85px;height:20px;"></div>
<div class="a" style="left:246px;top:88px;width:55px;height:22px;background:linear-gradient(#ffffff,#f7f6f3 40%,#efebe5);border:1px solid #9a958b;border-bottom:none;border-radius:4px 4px 0 0"></div>
<div class="a" style="left:247px;top:88px;width:53px;height:2px;background:#5b94d6;border-radius:3px 3px 0 0"></div>
<span class="t b" id="tab0" style="left:247.3px;top:90.8px;transform:scale(1.122,.93);">Normal</span>
<span class="t " id="tab1" style="left:307px;top:92px;transform:scale(1,.93);">Outline</span>
<span class="t " id="tab2" style="left:362px;top:92px;transform:scale(1,.93);">Notes</span>
<span class="t " id="tab3" style="left:410px;top:92px;transform:scale(1,.93);letter-spacing:.12px">Handout</span>
<span class="t " id="tab4" style="left:476px;top:92px;transform:scale(1,.93);">Slide Sorter</span>
<div class="a" style="left:246px;top:178px;width:454px;height:342px;background:#000"></div>
<svg class="g" style="left:247px;top:179px" width="451" height="339"><use href="#art" width="451" height="339"/></svg>
<svg style="left:246px;top:178px" width="454" height="342"><g fill="none" stroke="#aab3c8" stroke-width="1.5" stroke-dasharray="8.5 1.6 2.2 1.6"><rect x="23.2" y="16" width="406" height="53"/><rect x="23.2" y="82" width="406" height="219.5"/></g></svg>
<span class="t w" id="mtitle" style="left:269px;top:202px;width:406px;height:36px;line-height:36px;text-align:center;font-family:'Liberation Serif',serif;font-weight:bold;font-size:28px;color:#dfe4f6">Click to add title</span>
<span class="t w" id="mtext" style="left:269px;top:358px;width:406px;height:22px;line-height:22px;text-align:center;font-size:18px;color:#dfe6f4">Click to add text</span>
<div class="tr" style="left:712px;top:112px;width:15px;height:479px;"></div>
<div class="th thh" style="left:712px;top:112px;width:15px;height:13px;"></div>
<svg style="left:716px;top:116.5px" width="7" height="4" viewBox="0 0 7 4"><path d="M0 4L3.5 0L7 4Z" fill="#111"/></svg>
<div class="th thh" style="left:712px;top:576px;width:15px;height:15px;"></div>
<svg style="left:716px;top:581.5px" width="7" height="4" viewBox="0 0 7 4"><path d="M0 0L3.5 4L7 0Z" fill="#111"/></svg>
<div class="th thv" style="left:712px;top:193px;width:15px;height:319px;"></div>
<svg style="left:716px;top:349px" width="7" height="7" viewBox="0 0 7 7"><path d="M0 .5H7M0 3.5H7M0 6.5H7" stroke="#aaa59b" stroke-width="1"/></svg>
<div class="tr" style="left:240px;top:591px;width:472px;height:14px;"></div>
<div class="th thv" style="left:240px;top:591px;width:14px;height:14px;"></div>
<svg style="left:245px;top:594.5px" width="4" height="7" viewBox="0 0 4 7"><path d="M4 0L0 3.5L4 7Z" fill="#111"/></svg>
<div class="th thv" style="left:698px;top:591px;width:14px;height:14px;"></div>
<svg style="left:703px;top:594.5px" width="4" height="7" viewBox="0 0 4 7"><path d="M0 0L4 3.5L0 7Z" fill="#111"/></svg>
<div class="th thh" style="left:399px;top:591px;width:155px;height:14px;"></div>
<svg style="left:473px;top:595px" width="7" height="6" viewBox="0 0 7 6"><path d="M.5 0V6M3.5 0V6M6.5 0V6" stroke="#aaa59b" stroke-width="1"/></svg>
<svg style="left:729px;top:327px" width="3.4" height="34" viewBox="0 0 3.4 34"><path d="M3.2 2.4L0 0V4.8ZM3.2 31.4L0 29V33.8Z" fill="#222"/><rect x=".8" y="8.2" width="1.3" height="1.5" fill="#3a3a3a"/><rect x=".8" y="12.399999999999999" width="1.3" height="1.5" fill="#3a3a3a"/><rect x=".8" y="16.6" width="1.3" height="1.5" fill="#3a3a3a"/><rect x=".8" y="20.8" width="1.3" height="1.5" fill="#3a3a3a"/><rect x=".8" y="25.0" width="1.3" height="1.5" fill="#3a3a3a"/></svg>
<div class="vl" style="left:734px;top:85px;height:521px;background:#cbc6bd"></div>
<div class="vl" style="left:735px;top:85px;height:521px;background:#fbfaf8"></div>
<div class="vl" style="left:958px;top:85px;height:521px;background:#cbc6bd"></div>
<div class="vl" style="left:959px;top:85px;height:521px;background:#fbfaf8"></div>
<span class="t b" id="tasksT" style="left:738.4px;top:89.2px;transform:scale(1.149,.93);">Tasks</span>
<span class="t " id="viewT" style="left:891px;top:88.6px;transform:scale(1,.93);letter-spacing:-.3px">View</span>
<svg style="left:930px;top:94.5px" width="6" height="3.4" viewBox="0 0 6 3.4"><path d="M0 0H6L3 3.4Z" fill="#000"/></svg>
<svg style="left:945.5px;top:93px" width="8" height="7.5" viewBox="0 0 8 7.5"><path d="M.9 .9L7.1 6.6M7.1 .9L.9 6.6" stroke="#30263c" stroke-width="1.9"/></svg>
<div class="row" style="left:737px;top:109px;width:218px;height:16px;"></div>
<svg style="left:742.5px;top:113.5px" width="5.5" height="8" viewBox="0 0 5.5 8"><path d="M.5 .5V7.5L5 4Z" fill="#8c9ce0" stroke="#3c4c9c" stroke-width=".9"/></svg>
<span class="t " id="r1" style="left:753.3px;top:110.3px;transform:scale(1,.93);letter-spacing:-0.12px">Master Pages</span>
<div class="row" style="left:737px;top:125px;width:218px;height:16px;"></div>
<svg style="left:741.5px;top:131.0px" width="8" height="5.5" viewBox="0 0 8 5.5"><path d="M.5 .5H7.5L4 5Z" fill="#8c9ce0" stroke="#3c4c9c" stroke-width=".9"/></svg>
<span class="t b" id="r2" style="left:753.3px;top:126.0px;transform:scale(1.130,.93);">Layouts</span>
<div class="a" style="left:737px;top:141px;width:218px;height:430px;background:#fff;border:1px solid #b9b4ab"></div>
<div class="a" style="left:840px;top:144px;width:99px;height:62px;border:1px solid #111;box-shadow:inset 0 0 0 1px #fff,inset 0 0 0 2px #2a2a2a"></div>
<div class="lay" style="left:761px;top:153px"><svg style="left:0;top:0" width="56" height="42" viewBox="0 0 57 43"></svg></div>
<div class="lay" style="left:860px;top:153px"><svg style="left:0;top:0" width="56" height="42" viewBox="0 0 57 43"><rect x="4.5" y="3.5" width="48" height="6.5" fill="#fff" stroke="#cfcfcf"/><rect x="7" y="5.6" width="43" height="2.6" fill="#9a9a9a"/><rect x="4.5" y="17" width="48" height="23.5" fill="#fff" stroke="#cfcfcf"/><rect x="12" y="27" width="33" height="3" fill="#9a9a9a"/></svg></div>
<div class="lay" style="left:761px;top:215px"><svg style="left:0;top:0" width="56" height="42" viewBox="0 0 57 43"><rect x="4.5" y="3.5" width="48" height="6.5" fill="#fff" stroke="#cfcfcf"/><rect x="7" y="5.6" width="43" height="2.6" fill="#9a9a9a"/><rect x="4.5" y="17" width="48" height="23.5" fill="#fff" stroke="#cfcfcf"/><rect x="9" y="19.5" width="2" height="2" fill="#111"/><rect x="14" y="19.8" width="31" height="1.6" fill="#9a9a9a"/><rect x="14" y="24.4" width="2" height="2" fill="#111"/><rect x="19" y="24.7" width="26" height="1.6" fill="#9a9a9a"/><rect x="14" y="29.3" width="2" height="2" fill="#111"/><rect x="19" y="29.6" width="26" height="1.6" fill="#9a9a9a"/><rect x="19" y="34.2" width="2" height="2" fill="#111"/><rect x="24" y="34.5" width="21" height="1.6" fill="#9a9a9a"/></svg></div>
<div class="lay" style="left:860px;top:215px"><svg style="left:0;top:0" width="56" height="42" viewBox="0 0 57 43"><rect x="4.5" y="3.5" width="48" height="6.5" fill="#fff" stroke="#cfcfcf"/><rect x="7" y="5.6" width="43" height="2.6" fill="#9a9a9a"/><rect x="4.5" y="17" width="22" height="23.5" fill="#fff" stroke="#cfcfcf"/><rect x="30.5" y="17" width="22" height="23.5" fill="#fff" stroke="#cfcfcf"/><rect x="7" y="19.5" width="2" height="2" fill="#111"/><rect x="12" y="19.8" width="11" height="1.6" fill="#9a9a9a"/><rect x="10.5" y="24.4" width="2" height="2" fill="#111"/><rect x="15.5" y="24.7" width="7.5" height="1.6" fill="#9a9a9a"/><rect x="10.5" y="29.3" width="2" height="2" fill="#111"/><rect x="15.5" y="29.6" width="7.5" height="1.6" fill="#9a9a9a"/><rect x="14" y="34.2" width="2" height="2" fill="#111"/><rect x="19" y="34.5" width="4" height="1.6" fill="#9a9a9a"/><rect x="33" y="19.5" width="2" height="2" fill="#111"/><rect x="38" y="19.8" width="11" height="1.6" fill="#9a9a9a"/><rect x="36.5" y="24.4" width="2" height="2" fill="#111"/><rect x="41.5" y="24.7" width="7.5" height="1.6" fill="#9a9a9a"/><rect x="36.5" y="29.3" width="2" height="2" fill="#111"/><rect x="41.5" y="29.6" width="7.5" height="1.6" fill="#9a9a9a"/><rect x="40" y="34.2" width="2" height="2" fill="#111"/><rect x="45" y="34.5" width="4" height="1.6" fill="#9a9a9a"/></svg></div>
<div class="lay" style="left:761px;top:276px"><svg style="left:0;top:0" width="56" height="42" viewBox="0 0 57 43"><rect x="4.5" y="3.5" width="48" height="6.5" fill="#fff" stroke="#cfcfcf"/><rect x="7" y="5.6" width="43" height="2.6" fill="#9a9a9a"/></svg></div>
<div class="lay" style="left:860px;top:276px"><svg style="left:0;top:0" width="56" height="42" viewBox="0 0 57 43"><rect x="3.5" y="3.5" width="50" height="37" fill="#fff" stroke="#cfcfcf"/><rect x="7" y="20.5" width="43" height="3" fill="#8a8a8a"/></svg></div>
<div class="lay" style="left:761px;top:337px"><svg style="left:0;top:0" width="56" height="42" viewBox="0 0 57 43"><rect x="4.5" y="3.5" width="48" height="6.5" fill="#fff" stroke="#cfcfcf"/><rect x="7" y="5.6" width="43" height="2.6" fill="#9a9a9a"/><rect x="4.5" y="15" width="48" height="25.5" fill="#fff" stroke="#cfcfcf"/></svg></div>
<div class="lay" style="left:860px;top:337px"><svg style="left:0;top:0" width="56" height="42" viewBox="0 0 57 43"><rect x="4.5" y="3.5" width="48" height="6.5" fill="#fff" stroke="#cfcfcf"/><rect x="7" y="5.6" width="43" height="2.6" fill="#9a9a9a"/><rect x="4.5" y="15" width="48" height="25.5" fill="#fff" stroke="#cfcfcf"/><rect x="8.5" y="33.5" width="5.4" height="5.5" fill="#efefef" stroke="#111" stroke-width="1.1"/><rect x="17.3" y="27.5" width="5.4" height="11.5" fill="#efefef" stroke="#111" stroke-width="1.1"/><rect x="26.1" y="21.5" width="5.4" height="17.5" fill="#efefef" stroke="#111" stroke-width="1.1"/><rect x="34.900000000000006" y="29.5" width="5.4" height="9.5" fill="#efefef" stroke="#111" stroke-width="1.1"/><rect x="43.7" y="25.5" width="5.4" height="13.5" fill="#efefef" stroke="#111" stroke-width="1.1"/></svg></div>
<div class="lay" style="left:761px;top:399px"><svg style="left:0;top:0" width="56" height="42" viewBox="0 0 57 43"><rect x="4.5" y="3.5" width="48" height="6.5" fill="#fff" stroke="#cfcfcf"/><rect x="7" y="5.6" width="43" height="2.6" fill="#9a9a9a"/><rect x="4.5" y="15.5" width="48" height="22" fill="#fff" stroke="#111" stroke-width="1.2"/><path d="M4.5 20H52.5" stroke="#111" stroke-width="1"/><path d="M4.5 24.5H52.5" stroke="#111" stroke-width="1"/><path d="M4.5 29H52.5" stroke="#111" stroke-width="1"/><path d="M4.5 33.2H52.5" stroke="#111" stroke-width="1"/><path d="M14 15.5V37.5" stroke="#111" stroke-width="1"/><path d="M23.5 15.5V37.5" stroke="#111" stroke-width="1"/><path d="M33 15.5V37.5" stroke="#111" stroke-width="1"/><path d="M42.5 15.5V37.5" stroke="#111" stroke-width="1"/><rect x="6.5" y="17.2" width="5.5" height="1.3" fill="#a8a8a8"/><rect x="16" y="17.2" width="5.5" height="1.3" fill="#a8a8a8"/><rect x="25.5" y="17.2" width="5.5" height="1.3" fill="#a8a8a8"/><rect x="35" y="17.2" width="5.5" height="1.3" fill="#a8a8a8"/><rect x="44.5" y="17.2" width="5.5" height="1.3" fill="#a8a8a8"/><rect x="6.5" y="21.599999999999998" width="5.5" height="1.3" fill="#a8a8a8"/><rect x="16" y="21.599999999999998" width="5.5" height="1.3" fill="#a8a8a8"/><rect x="25.5" y="21.599999999999998" width="5.5" height="1.3" fill="#a8a8a8"/><rect x="35" y="21.599999999999998" width="5.5" height="1.3" fill="#a8a8a8"/><rect x="44.5" y="21.599999999999998" width="5.5" height="1.3" fill="#a8a8a8"/><rect x="6.5" y="26.2" width="5.5" height="1.3" fill="#a8a8a8"/><rect x="16" y="26.2" width="5.5" height="1.3" fill="#a8a8a8"/><rect x="25.5" y="26.2" width="5.5" height="1.3" fill="#a8a8a8"/><rect x="35" y="26.2" width="5.5" height="1.3" fill="#a8a8a8"/><rect x="44.5" y="26.2" width="5.5" height="1.3" fill="#a8a8a8"/><rect x="6.5" y="30.599999999999998" width="5.5" height="1.3" fill="#a8a8a8"/><rect x="16" y="30.599999999999998" width="5.5" height="1.3" fill="#a8a8a8"/><rect x="25.5" y="30.599999999999998" width="5.5" height="1.3" fill="#a8a8a8"/><rect x="35" y="30.599999999999998" width="5.5" height="1.3" fill="#a8a8a8"/><rect x="44.5" y="30.599999999999998" width="5.5" height="1.3" fill="#a8a8a8"/><rect x="6.5" y="34.8" width="5.5" height="1.3" fill="#a8a8a8"/><rect x="16" y="34.8" width="5.5" height="1.3" fill="#a8a8a8"/><rect x="25.5" y="34.8" width="5.5" height="1.3" fill="#a8a8a8"/><rect x="35" y="34.8" width="5.5" height="1.3" fill="#a8a8a8"/><rect x="44.5" y="34.8" width="5.5" height="1.3" fill="#a8a8a8"/></svg></div>
<div class="lay" style="left:860px;top:399px"><svg style="left:0;top:0" width="56" height="42" viewBox="0 0 57 43"><rect x="4.5" y="3.5" width="48" height="6.5" fill="#fff" stroke="#cfcfcf"/><rect x="7" y="5.6" width="43" height="2.6" fill="#9a9a9a"/><rect x="5" y="18" width="19" height="20" fill="#d4d4d4"/><path d="M5 18H24V38H5Z" fill="url(#dots)"/><path d="M7 31L15 23L23 31V37H7Z" fill="#fff" stroke="#111" stroke-width=".9"/><path d="M6 35C10 31 13 38 17 34S22 35 24 33" stroke="#111" stroke-width="1.2" fill="none"/><rect x="30.5" y="17" width="22" height="23.5" fill="#fff" stroke="#cfcfcf"/><rect x="33" y="19.5" width="2" height="2" fill="#111"/><rect x="38" y="19.8" width="11" height="1.6" fill="#9a9a9a"/><rect x="36.5" y="24.4" width="2" height="2" fill="#111"/><rect x="41.5" y="24.7" width="7.5" height="1.6" fill="#9a9a9a"/><rect x="36.5" y="29.3" width="2" height="2" fill="#111"/><rect x="41.5" y="29.6" width="7.5" height="1.6" fill="#9a9a9a"/><rect x="40" y="34.2" width="2" height="2" fill="#111"/><rect x="45" y="34.5" width="4" height="1.6" fill="#9a9a9a"/></svg></div>
<div class="lay" style="left:761px;top:460px"><svg style="left:0;top:0" width="56" height="42" viewBox="0 0 57 43"><rect x="4.5" y="3.5" width="48" height="6.5" fill="#fff" stroke="#cfcfcf"/><rect x="7" y="5.6" width="43" height="2.6" fill="#9a9a9a"/><rect x="4.5" y="17" width="22" height="23.5" fill="#fff" stroke="#cfcfcf"/><rect x="7" y="19.5" width="2" height="2" fill="#111"/><rect x="12" y="19.8" width="11" height="1.6" fill="#9a9a9a"/><rect x="10.5" y="24.4" width="2" height="2" fill="#111"/><rect x="15.5" y="24.7" width="7.5" height="1.6" fill="#9a9a9a"/><rect x="10.5" y="29.3" width="2" height="2" fill="#111"/><rect x="15.5" y="29.6" width="7.5" height="1.6" fill="#9a9a9a"/><rect x="14" y="34.2" width="2" height="2" fill="#111"/><rect x="19" y="34.5" width="4" height="1.6" fill="#9a9a9a"/><rect x="30.5" y="17" width="22" height="23.5" fill="#fff" stroke="#cfcfcf"/><rect x="33.0" y="29.0" width="4.4" height="10.5" fill="#efefef" stroke="#111" stroke-width="1.1"/><rect x="39.2" y="23.0" width="4.4" height="16.5" fill="#efefef" stroke="#111" stroke-width="1.1"/><rect x="45.4" y="26.5" width="4.4" height="13" fill="#efefef" stroke="#111" stroke-width="1.1"/></svg></div>
<div class="lay" style="left:860px;top:460px"><svg style="left:0;top:0" width="56" height="42" viewBox="0 0 57 43"><rect x="4.5" y="3.5" width="48" height="6.5" fill="#fff" stroke="#cfcfcf"/><rect x="7" y="5.6" width="43" height="2.6" fill="#9a9a9a"/><rect x="4.5" y="17" width="22" height="23.5" fill="#fff" stroke="#cfcfcf"/><rect x="7" y="19.5" width="2" height="2" fill="#111"/><rect x="12" y="19.8" width="11" height="1.6" fill="#9a9a9a"/><rect x="10.5" y="24.4" width="2" height="2" fill="#111"/><rect x="15.5" y="24.7" width="7.5" height="1.6" fill="#9a9a9a"/><rect x="10.5" y="29.3" width="2" height="2" fill="#111"/><rect x="15.5" y="29.6" width="7.5" height="1.6" fill="#9a9a9a"/><rect x="14" y="34.2" width="2" height="2" fill="#111"/><rect x="19" y="34.5" width="4" height="1.6" fill="#9a9a9a"/><rect x="32" y="18" width="19" height="20" fill="#d4d4d4"/><path d="M32 18H51V38H32Z" fill="url(#dots)"/><path d="M34 31L42 23L50 31V37H34Z" fill="#fff" stroke="#111" stroke-width=".9"/><path d="M33 35C37 31 40 38 44 34S49 35 51 33" stroke="#111" stroke-width="1.2" fill="none"/></svg></div>
<div class="lay" style="left:761px;top:522px"><svg style="left:0;top:0" width="56" height="42" viewBox="0 0 57 43"><rect x="4.5" y="3.5" width="48" height="6.5" fill="#fff" stroke="#cfcfcf"/><rect x="7" y="5.6" width="43" height="2.6" fill="#9a9a9a"/><rect x="4.5" y="17" width="22" height="23.5" fill="#fff" stroke="#cfcfcf"/><rect x="7.0" y="29.0" width="4.4" height="10.5" fill="#efefef" stroke="#111" stroke-width="1.1"/><rect x="13.2" y="23.0" width="4.4" height="16.5" fill="#efefef" stroke="#111" stroke-width="1.1"/><rect x="19.4" y="26.5" width="4.4" height="13" fill="#efefef" stroke="#111" stroke-width="1.1"/><rect x="30.5" y="17" width="22" height="23.5" fill="#fff" stroke="#cfcfcf"/><rect x="33" y="19.5" width="2" height="2" fill="#111"/><rect x="38" y="19.8" width="11" height="1.6" fill="#9a9a9a"/><rect x="36.5" y="24.4" width="2" height="2" fill="#111"/><rect x="41.5" y="24.7" width="7.5" height="1.6" fill="#9a9a9a"/><rect x="36.5" y="29.3" width="2" height="2" fill="#111"/><rect x="41.5" y="29.6" width="7.5" height="1.6" fill="#9a9a9a"/><rect x="40" y="34.2" width="2" height="2" fill="#111"/><rect x="45" y="34.5" width="4" height="1.6" fill="#9a9a9a"/></svg></div>
<div class="lay" style="left:860px;top:522px"><svg style="left:0;top:0" width="56" height="42" viewBox="0 0 57 43"><rect x="4.5" y="3.5" width="48" height="6.5" fill="#fff" stroke="#cfcfcf"/><rect x="7" y="5.6" width="43" height="2.6" fill="#9a9a9a"/><rect x="4.5" y="17" width="22" height="23.5" fill="#fff" stroke="#cfcfcf"/><rect x="7" y="19.5" width="2" height="2" fill="#111"/><rect x="12" y="19.8" width="11" height="1.6" fill="#9a9a9a"/><rect x="10.5" y="24.4" width="2" height="2" fill="#111"/><rect x="15.5" y="24.7" width="7.5" height="1.6" fill="#9a9a9a"/><rect x="10.5" y="29.3" width="2" height="2" fill="#111"/><rect x="15.5" y="29.6" width="7.5" height="1.6" fill="#9a9a9a"/><rect x="14" y="34.2" width="2" height="2" fill="#111"/><rect x="19" y="34.5" width="4" height="1.6" fill="#9a9a9a"/><rect x="30.5" y="17" width="22" height="23.5" fill="#fff" stroke="#cfcfcf"/></svg></div>
<div class="tr" style="left:942px;top:142px;width:13px;height:428px;"></div>
<div class="th thh" style="left:942px;top:142px;width:13px;height:14px;"></div>
<svg style="left:945px;top:147px" width="7" height="4" viewBox="0 0 7 4"><path d="M0 4L3.5 0L7 4Z" fill="#111"/></svg>
<div class="th thh" style="left:942px;top:556px;width:13px;height:14px;"></div>
<svg style="left:945px;top:561px" width="7" height="4" viewBox="0 0 7 4"><path d="M0 0L3.5 4L7 0Z" fill="#111"/></svg>
<div class="th thv" style="left:942px;top:155px;width:13px;height:250px;"></div>
<svg style="left:945px;top:277px" width="7" height="7" viewBox="0 0 7 7"><path d="M0 .5H7M0 3.5H7M0 6.5H7" stroke="#aaa59b" stroke-width="1"/></svg>
<div class="row" style="left:737px;top:570px;width:218px;height:16px;"></div>
<svg style="left:742.5px;top:573.5px" width="5.5" height="8" viewBox="0 0 5.5 8"><path d="M.5 .5V7.5L5 4Z" fill="#8c9ce0" stroke="#3c4c9c" stroke-width=".9"/></svg>
<span class="t " id="r3" style="left:753.3px;top:569.3px;transform:scale(1,.93);letter-spacing:0.03px">Custom Animation</span>
<div class="row" style="left:737px;top:586px;width:218px;height:16px;"></div>
<svg style="left:742.5px;top:589.5px" width="5.5" height="8" viewBox="0 0 5.5 8"><path d="M.5 .5V7.5L5 4Z" fill="#8c9ce0" stroke="#3c4c9c" stroke-width=".9"/></svg>
<span class="t " id="r4" style="left:753.3px;top:585.3px;transform:scale(1,.93);letter-spacing:0.05px">Slide Transition</span>
<div class="hl" style="left:0px;top:605px;width:960px;background:#c9c4bb"></div>
<div class="hl" style="left:0px;top:606px;width:960px;background:#d8d3ca"></div>
<div class="hl" style="left:0px;top:607px;width:960px;background:#fbfaf8"></div>
<svg style="left:2px;top:610px" width="5" height="22" viewBox="0 0 5 22"><rect x="0" y="0" width="5" height="1" fill="#cdc8bf"/><rect x="0" y="1" width="5" height="1" fill="#fbfaf8"/><rect x="0" y="2" width="5" height="1" fill="#cdc8bf"/><rect x="0" y="3" width="5" height="1" fill="#fbfaf8"/><rect x="0" y="4" width="5" height="1" fill="#cdc8bf"/><rect x="0" y="5" width="5" height="1" fill="#fbfaf8"/><rect x="0" y="6" width="5" height="1" fill="#cdc8bf"/><rect x="0" y="7" width="5" height="1" fill="#fbfaf8"/><rect x="0" y="8" width="5" height="1" fill="#cdc8bf"/><rect x="0" y="9" width="5" height="1" fill="#fbfaf8"/><rect x="0" y="10" width="5" height="1" fill="#cdc8bf"/><rect x="0" y="11" width="5" height="1" fill="#fbfaf8"/><rect x="0" y="12" width="5" height="1" fill="#cdc8bf"/><rect x="0" y="13" width="5" height="1" fill="#fbfaf8"/><rect x="0" y="14" width="5" height="1" fill="#cdc8bf"/><rect x="0" y="15" width="5" height="1" fill="#fbfaf8"/><rect x="0" y="16" width="5" height="1" fill="#cdc8bf"/><rect x="0" y="17" width="5" height="1" fill="#fbfaf8"/><rect x="0" y="18" width="5" height="1" fill="#cdc8bf"/><rect x="0" y="19" width="5" height="1" fill="#fbfaf8"/><rect x="0" y="20" width="5" height="1" fill="#cdc8bf"/><rect x="0" y="21" width="5" height="1" fill="#fbfaf8"/></svg>
<div class="press" style="left:13.5px;top:608.5px;width:23.5px;height:25.5px;"></div>
<svg style="left:21.5px;top:613.5px" width="10" height="15" viewBox="0 0 10 15"><path d="M1 .8V12.2L3.8 9.6L5.8 14L7.8 13.2L5.8 8.8H9.4Z" fill="#fff" stroke="#000" stroke-width="1.2" stroke-linejoin="round"/></svg>
<div class="sep" style="left:40px;top:614px"></div>
<svg style="left:49px;top:613.5px" width="15" height="15" viewBox="0 0 15 15"><path d="M.5 14L14 .5" stroke="#111" stroke-width="1.2"/></svg>
<svg style="left:73.5px;top:617.5px" width="12" height="7" viewBox="0 0 12 7"><path d="M0 3.5H8" stroke="#000" stroke-width="1.6"/><path d="M12 3.5L6.6 .4L7.8 3.5L6.6 6.6Z" fill="#000"/></svg>
<svg style="left:97px;top:616px" width="14" height="10.5" viewBox="0 0 14 10.5"><rect x=".6" y=".6" width="12.8" height="9" rx=".8" fill="#6b8cbc" stroke="#34527e" stroke-width="1.2"/>
<path d="M1.6 1.8H12.4" stroke="#9ab4dc" stroke-width="1"/></svg>
<svg style="left:120px;top:615px" width="14" height="12" viewBox="0 0 14 12"><ellipse cx="7" cy="6" rx="6.5" ry="5.5" fill="#7b9bc8" stroke="#5a7fb0" stroke-width="1"/>
<ellipse cx="6" cy="4.4" rx="4" ry="2.4" fill="#9dbbe2" opacity=".7"/></svg>
<svg style="left:144px;top:614.5px" width="14" height="15" viewBox="0 0 14 15"><path d="M.4 .4H13.6V4.2H12.6C12.2 2.4 11.4 1.6 9 1.6V11C9 12.2 9.6 12.6 11 12.8V13.8H3V12.8C4.4 12.6 5 12.2 5 11V1.6C2.6 1.6 1.8 2.4 1.4 4.2H.4Z" fill="#0a0a0a"/>
<path d="M3 14.2H11" stroke="#b5a27a" stroke-width=".8"/></svg>
<div class="sep" style="left:166px;top:614px"></div>
<svg style="left:173.5px;top:614.5px" width="16" height="13" viewBox="0 0 16 13"><path d="M.6 .6C4.6 1 4.2 5 3.6 7.2C3.2 9.6 5 11 7.4 9.6" stroke="#1b2a5e" stroke-width="1.6" fill="none"/>
<path d="M.6 .6C3 2.4 2.8 6 3 9.4L.8 9.6Z" fill="#8fb1dd" opacity=".8"/>
<path d="M6.6 9.6L13.6 3L15.4 4.8L8.4 11.4Z" fill="#e3b94a" stroke="#7b5a12" stroke-width=".9"/>
<path d="M6.6 9.6L8.4 11.4L5.6 12Z" fill="#222"/></svg>
<svg style="left:198.6px;top:618.5px" width="5.8" height="3.5" viewBox="0 0 5.8 3.5"><path d="M0 0H5.8L2.9 3.5Z" fill="#000"/></svg>
<svg style="left:213px;top:613.5px" width="15" height="15" viewBox="0 0 15 15"><path d="M2.5 2.5H6.5V11.5H12" stroke="#111" stroke-width="1.3" fill="none" stroke-linejoin="round"/>
<circle cx="2.4" cy="2.4" r="1.7" fill="#fff" stroke="#111" stroke-width="1.1"/>
<circle cx="12.4" cy="11.6" r="1.7" fill="#fff" stroke="#111" stroke-width="1.1"/></svg>
<svg style="left:238.6px;top:618.5px" width="5.8" height="3.5" viewBox="0 0 5.8 3.5"><path d="M0 0H5.8L2.9 3.5Z" fill="#000"/></svg>
<svg style="left:254px;top:614px" width="14" height="14" viewBox="0 0 14 14"><defs><linearGradient id="gd" x1="0" y1="0" x2="1" y2="1"><stop offset="0" stop-color="#f1f1ef"/><stop offset="1" stop-color="#b9b8b4"/></linearGradient></defs>
<path d="M7 .6L13.4 7L7 13.4L.6 7Z" fill="url(#gd)" stroke="#8a8985" stroke-width="1"/></svg>
<svg style="left:278.6px;top:618.5px" width="5.8" height="3.5" viewBox="0 0 5.8 3.5"><path d="M0 0H5.8L2.9 3.5Z" fill="#000"/></svg>
<svg style="left:293px;top:613px" width="15" height="15" viewBox="0 0 15 15"><defs><radialGradient id="gs" cx=".4" cy=".3" r=".7"><stop offset="0" stop-color="#fbfbfa"/><stop offset=".6" stop-color="#d0cfcc"/><stop offset="1" stop-color="#aeada9"/></radialGradient></defs>
<circle cx="7.5" cy="7.5" r="6.9" fill="url(#gs)" stroke="#9c9b97" stroke-width="1"/>
<circle cx="5.2" cy="5.4" r=".8" fill="#b7b6b2"/><circle cx="9.6" cy="5.4" r=".8" fill="#b7b6b2"/></svg>
<svg style="left:318.6px;top:618.5px" width="5.8" height="3.5" viewBox="0 0 5.8 3.5"><path d="M0 0H5.8L2.9 3.5Z" fill="#000"/></svg>
<svg style="left:332.5px;top:616px" width="16" height="10" viewBox="0 0 16 10"><path d="M.6 5L5 .8V3H10.4V.8L14.8 5L10.4 9.2V7H5V9.2Z" fill="#e4e3e0" stroke="#8a8985" stroke-width="1" stroke-linejoin="round"/></svg>
<svg style="left:358.1px;top:618.5px" width="5.8" height="3.5" viewBox="0 0 5.8 3.5"><path d="M0 0H5.8L2.9 3.5Z" fill="#000"/></svg>
<svg style="left:373px;top:613.5px" width="15" height="15" viewBox="0 0 15 15"><defs><linearGradient id="gf" x1="0" y1="0" x2="0" y2="1"><stop offset="0" stop-color="#e6e5e2"/><stop offset="1" stop-color="#bdbcb8"/></linearGradient></defs>
<rect x=".6" y=".6" width="13.4" height="13.6" rx="1.6" fill="url(#gf)" stroke="#959490" stroke-width="1.1"/>
<path d="M3.6 1V14M1 3.4H14" stroke="#d8d7d4" stroke-width=".8"/></svg>
<svg style="left:398.1px;top:618.5px" width="5.8" height="3.5" viewBox="0 0 5.8 3.5"><path d="M0 0H5.8L2.9 3.5Z" fill="#000"/></svg>
<svg style="left:412.5px;top:614px" width="16" height="14" viewBox="0 0 16 14"><defs><linearGradient id="gc" x1="0" y1="0" x2="1" y2="1"><stop offset="0" stop-color="#dddcd9"/><stop offset="1" stop-color="#b5b4b0"/></linearGradient></defs>
<path d="M2 .6H13.4A1.4 1.4 0 0 1 14.8 2V8.4A1.4 1.4 0 0 1 13.4 9.8H6L1.4 13.2L3 9.8H2A1.4 1.4 0 0 1 .6 8.4V2A1.4 1.4 0 0 1 2 .6Z" fill="url(#gc)" stroke="#8a8985" stroke-width="1"/></svg>
<svg style="left:438.1px;top:618.5px" width="5.8" height="3.5" viewBox="0 0 5.8 3.5"><path d="M0 0H5.8L2.9 3.5Z" fill="#000"/></svg>
<svg style="left:452.5px;top:613.5px" width="15" height="15" viewBox="0 0 15 15"><path d="M7.4 .8L9.3 5.4L14.2 5.7L10.4 8.9L11.6 13.7L7.4 11.1L3.2 13.7L4.4 8.9L.6 5.7L5.5 5.4Z" fill="#e2e1de" stroke="#8e8d89" stroke-width="1" stroke-linejoin="round"/></svg>
<svg style="left:478.1px;top:618.5px" width="5.8" height="3.5" viewBox="0 0 5.8 3.5"><path d="M0 0H5.8L2.9 3.5Z" fill="#000"/></svg>
<div class="sep" style="left:492px;top:614px"></div>
<svg style="left:502px;top:613px" width="13" height="15" viewBox="0 0 13 15"><path d="M1.4 3.4L10.6 1.2L10.4 9.6L4.8 13.4Z" fill="none" stroke="#111" stroke-width="1.2"/>
<circle cx="1.4" cy="3.4" r="1.2" fill="#fff" stroke="#111" stroke-width=".9"/><circle cx="10.6" cy="1.2" r="1.2" fill="#fff" stroke="#111" stroke-width=".9"/>
<circle cx="10.4" cy="9.6" r="1.2" fill="#fff" stroke="#111" stroke-width=".9"/><circle cx="4.8" cy="13.4" r="1.2" fill="#fff" stroke="#111" stroke-width=".9"/></svg>
<svg style="left:526px;top:613px" width="13" height="16" viewBox="0 0 13 16"><path d="M8.2 .6L12.4 3L10.6 6L6.4 3.6Z" fill="#e7c77a" stroke="#6a4a12" stroke-width=".8"/>
<path d="M6.4 3.6L10.6 6L9.6 7.8L5.4 5.4Z" fill="#b0281c" stroke="#5a100a" stroke-width=".6"/>
<path d="M5.4 5.4L9.6 7.8L7.2 10.6L3.4 11.2L2.8 9Z" fill="#5a3a22" stroke="#2a1a0e" stroke-width=".7"/>
<path d="M3.2 10.8L2 13.2" stroke="#444" stroke-width="1.2"/>
<circle cx="1.8" cy="14" r="1.2" fill="#9db9e2" stroke="#4d76b4" stroke-width=".6"/></svg>
<div class="sep" style="left:547px;top:614px"></div>
<svg class="g" style="left:557px;top:613px" width="13" height="14" viewBox="0 0 13 14"><path d="M5.4 3.4L6.6 .6L7.8 3.4Z" fill="#a8a8a4" stroke="#777" stroke-width=".5"/>
<rect x=".7" y="3.7" width="12" height="9.8" rx=".8" fill="#a8947a" stroke="#4e3e2e" stroke-width="1.1"/>
<rect x="2.4" y="5.4" width="8.6" height="6.4" fill="#fdfdfc" stroke="#6a5844" stroke-width=".5"/>
<text x="6.7" y="10.9" font-family="Liberation Sans" font-weight="bold" font-size="5.6" text-anchor="middle" fill="#000" stroke="#000" stroke-width=".5">A</text></svg>
<svg style="left:579.5px;top:613.5px" width="15" height="15" viewBox="0 0 15 15"><rect x=".8" y=".8" width="12.6" height="12.6" fill="#f8f7f4" stroke="#9a9a96" stroke-width=".7" stroke-dasharray="1 1"/>
<circle cx="9.6" cy="4.4" r="3.4" fill="#f7e66a" stroke="#d4b400" stroke-width=".6"/>
<rect x="2.2" y="4.6" width="6" height="6" fill="#dc1818"/>
<path d="M4.4 12.4L8.8 5.8L12.6 12.4Z" fill="#2a5cae"/>
<rect x="0" y="0" width="1.6" height="1.6" fill="#222"/><rect x="12.4" y="0" width="1.8" height="1.8" fill="#111"/>
<rect x="0" y="12.4" width="1.8" height="1.8" fill="#111"/><rect x="12.4" y="12.4" width="1.8" height="1.8" fill="#111"/></svg>
<svg style="left:603px;top:613px" width="16" height="16" viewBox="0 0 16 16"><rect x=".7" y=".7" width="10" height="10" rx="2" fill="#f7f6f3" stroke="#8f8e8a" stroke-width="1.2"/>
<rect x="2.8" y="3" width="5.8" height="5" fill="#8d8a62"/>
<rect x="5.3" y="4.7" width="10" height="10" rx="2" fill="#f7f6f3" stroke="#8f8e8a" stroke-width="1.2"/>
<rect x="7.4" y="7.2" width="5.8" height="5" fill="#a58e56"/><rect x="7.4" y="7.2" width="5.8" height="2" fill="#8c8a70"/></svg>
<div class="sep" style="left:626px;top:614px"></div>
<svg style="left:634px;top:613.5px" width="16" height="15" viewBox="0 0 16 15"><defs><linearGradient id="gr" x1="0" y1="0" x2="1" y2="1"><stop offset="0" stop-color="#7f92aa"/><stop offset="1" stop-color="#bcc8d4"/></linearGradient></defs>
<path d="M.7 7.6L9 1.2L14 8.6L7 15Z" fill="url(#gr)" stroke="#2c3036" stroke-width="1.1" stroke-linejoin="round"/>
<path d="M11 .8C13 .6 14.2 1.8 14.2 3.4" stroke="#111" stroke-width="1.1" fill="none"/><path d="M12.6 3L14.3 5.4L15.8 3Z" fill="#111"/></svg>
<svg style="left:658px;top:614.5px" width="15" height="13" viewBox="0 0 15 13"><path d="M.9 0V13" stroke="#111" stroke-width="1.6"/>
<rect x="3" y="1" width="11.4" height="4" rx=".6" fill="#a5c585" stroke="#6d9048" stroke-width=".9"/>
<rect x="3" y="7" width="7" height="3.6" rx=".6" fill="#86a9d8" stroke="#4a72a8" stroke-width=".9"/></svg>
<svg style="left:682.6px;top:618.5px" width="5.8" height="3.5" viewBox="0 0 5.8 3.5"><path d="M0 0H5.8L2.9 3.5Z" fill="#000"/></svg>
<svg style="left:697px;top:613px" width="15" height="15" viewBox="0 0 15 15"><rect x="3.4" y=".4" width="11.4" height="11.6" fill="#d8d6d1"/>
<rect x=".4" y="3.2" width="11.4" height="11.6" fill="#c9c7c2"/>
<rect x="2.1" y="1.9" width="10.6" height="11" rx=".6" fill="#8fba62" stroke="#5c8a32" stroke-width="1"/>
<path d="M3 3H11.8V7C8 6.2 5.4 7 3 8.6Z" fill="#a7cc7c" opacity=".8"/></svg>
<svg style="left:722.6px;top:618.5px" width="5.8" height="3.5" viewBox="0 0 5.8 3.5"><path d="M0 0H5.8L2.9 3.5Z" fill="#000"/></svg>
<div class="sep" style="left:737px;top:614px"></div>
<svg style="left:745px;top:614px" width="15" height="14" viewBox="0 0 15 14"><path d="M2.4 .8H14.4V13.6H2.4V11.4H.8V8.8H2.4Z" fill="#a9a7a2"/></svg>
<svg style="left:769px;top:616.5px" width="16" height="11" viewBox="0 0 16 11"><path d="M.4 5.4L5 .6H11L15.6 5.4L11 10.2H5Z" fill="#a9a7a2"/><circle cx="8" cy="5.4" r="2.2" fill="#efebe5"/><circle cx="8" cy="5.4" r=".9" fill="#a9a7a2"/></svg>
<div class="ovf" style="left:792px;top:611px;width:9px;height:22px;"></div>
<svg style="left:794px;top:626.5px" width="5" height="3" viewBox="0 0 5 3"><path d="M0 0H5L2.5 3Z" fill="#000"/></svg>
<div class="hl" style="left:0px;top:635px;width:960px;background:#dcd7ce"></div>
<div class="hl" style="left:0px;top:636px;width:960px;background:#f9f8f5"></div>
<div class="st" style="left:5px;width:304px"></div>
<div class="st" style="left:314px;width:205px"></div>
<div class="st" style="left:524px;width:41px"></div>
<div class="st" style="left:570px;width:21px"></div>
<div class="st" style="left:596px;width:23px"></div>
<div class="st" style="left:623px;width:126px"></div>
<div class="st" style="left:753px;width:202px"></div>
<svg style="left:320.5px;top:640px" width="13" height="11" viewBox="0 0 13 11"><path d="M3.2 0V8.6M0 4.4H7" stroke="#2a2ad4" stroke-width="1.3"/><path d="M3.2 1V7.6M1 4.4H6" stroke="#8888ee" stroke-width=".5"/>
<path d="M4 4.5H12.5V10.5H4Z" fill="none" stroke="#333" stroke-width="1" stroke-dasharray="1 1"/></svg>
<span class="t " id="s1" style="left:340px;top:637.8px;transform:scale(1,.93);">6.74 / 0.74</span>
<svg style="left:422px;top:640px" width="14" height="11" viewBox="0 0 14 11"><path d="M1 2V4M1 6V8M0 5H2" stroke="#111" stroke-width="1"/>
<path d="M4.5 3.5H12.5V10H4.5Z" fill="none" stroke="#333" stroke-width="1" stroke-dasharray="1 1"/>
<path d="M4 .5H6.5M4 .5V2.5M13 .5H10.5M13 .5V2.5M4.6 1.2L6.4 3M12.4 1.2L10.6 3" stroke="#111" stroke-width=".9" fill="none"/></svg>
<span class="t " id="s2" style="left:441px;top:637.8px;transform:scale(1,.93);">0.00 x 0.00</span>
<span class="t " id="s3" style="left:533px;top:637.8px;transform:scale(1,.93);letter-spacing:-.5px">45%</span>
<span class="t " id="s4" style="left:628.5px;top:637.8px;transform:scale(1,.93);letter-spacing:-.12px">Slide 1 / 2</span>
<span class="t " id="s5" style="left:758px;top:637.8px;transform:scale(1,.93);">presentation</span>
</body>
</html>
